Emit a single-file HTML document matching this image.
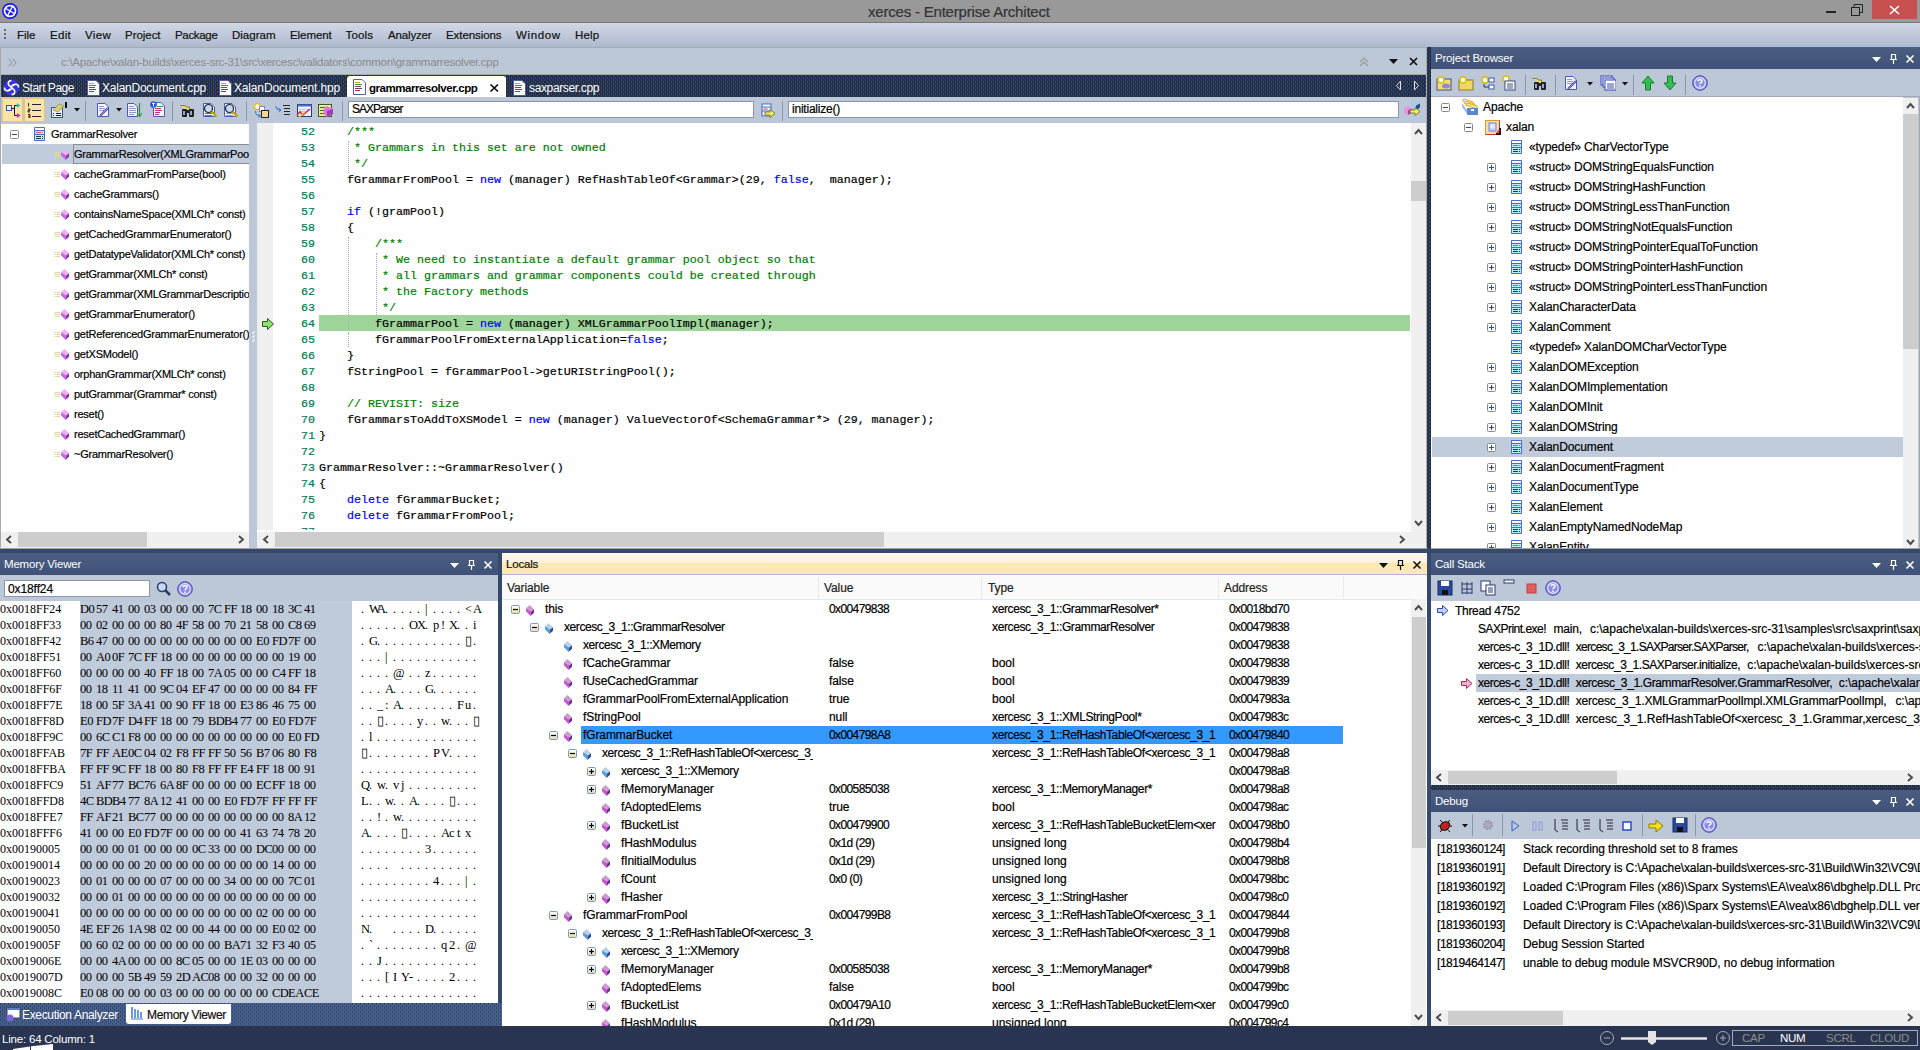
<!DOCTYPE html><html><head><meta charset="utf-8"><style>
*{margin:0;padding:0;box-sizing:border-box}
html,body{width:1920px;height:1050px;overflow:hidden;background:#bcc7d8;font-family:"Liberation Sans", sans-serif;}
.t{position:absolute;white-space:pre;font-family:"Liberation Sans", sans-serif;font-size:11px;letter-spacing:-0.25px;line-height:14px;color:#000;-webkit-text-stroke:0.2px currentColor}
.m{position:absolute;white-space:pre;font-family:"Liberation Mono", monospace;font-size:11.67px;line-height:16px;color:#000;-webkit-text-stroke:0.2px currentColor}
.s{position:absolute;white-space:pre;font-family:"Liberation Serif", serif;font-size:12px;line-height:16px;color:#000}
.hdr{position:absolute;background:linear-gradient(#4b5e80,#3f5179);}
.tb{position:absolute;background:#bcc7d8}
</style></head><body>
<svg width="0" height="0" style="position:absolute"><defs>
<pattern id="dp" width="4" height="4" patternUnits="userSpaceOnUse"><rect width="4" height="4" fill="#222e46"/><rect x="0" y="0" width="1" height="2" fill="#3b4e70"/><rect x="2" y="2" width="1" height="2" fill="#3b4e70"/></pattern>
<pattern id="dp2" width="4" height="4" patternUnits="userSpaceOnUse"><rect width="4" height="4" fill="#48608c"/><rect x="0" y="0" width="1" height="2" fill="#2e4068"/><rect x="2" y="2" width="1" height="2" fill="#2e4068"/></pattern>
</defs></svg>
<div style="position:absolute;left:0px;top:0px;width:1920px;height:22px;background:#999999"></div>
<div style="position:absolute;left:0px;top:22px;width:1920px;height:1px;background:#787878"></div>
<svg style="position:absolute;left:0px;top:0px" width="22" height="22" viewBox="0 0 22 22">
<circle cx="10" cy="11" r="8" fill="#1a1af8"/><circle cx="10" cy="11" r="6.3" fill="#fff"/><circle cx="10" cy="11" r="4.6" fill="#1a1af8"/>
<path d="M5 8 L15 14 M13 5.5 L7 16.5" stroke="#fff" stroke-width="1.4"/></svg>
<div class="t" style="left:868px;top:3px;font-size:15px;letter-spacing:-0.2px;color:#333;line-height:18px">xerces - Enterprise Architect</div>
<div style="position:absolute;left:1826px;top:11px;width:10px;height:2px;background:#222"></div>
<svg style="position:absolute;left:1851px;top:4px" width="12" height="12"><rect x="0.5" y="3.5" width="8" height="8" fill="none" stroke="#222"/><path d="M3 3.5 V0.5 H11.5 V8.5 H8.5" fill="none" stroke="#222"/></svg>
<div style="position:absolute;left:1872px;top:0px;width:45px;height:19px;background:#c75050"></div>
<svg style="position:absolute;left:1889px;top:5px" width="11" height="10"><path d="M1 1 L10 9 M10 1 L1 9" stroke="#fff" stroke-width="1.6"/></svg>
<div style="position:absolute;left:0px;top:23px;width:1920px;height:24px;background:linear-gradient(#d0d8e6,#c0c9da 50%,#adb9ce)"></div>
<div style="position:absolute;left:4px;top:29px;width:2px;height:2px;background:#5a6a80"></div>
<div style="position:absolute;left:4px;top:33px;width:2px;height:2px;background:#5a6a80"></div>
<div style="position:absolute;left:4px;top:37px;width:2px;height:2px;background:#5a6a80"></div>
<div class="t" style="left:17px;top:28px;font-size:11.5px;letter-spacing:-0.008px;color:#111">File</div>
<div class="t" style="left:50px;top:28px;font-size:11.5px;letter-spacing:0.296px;color:#111">Edit</div>
<div class="t" style="left:85px;top:28px;font-size:11.5px;letter-spacing:0.321px;color:#111">View</div>
<div class="t" style="left:125px;top:28px;font-size:11.5px;letter-spacing:-0.042px;color:#111">Project</div>
<div class="t" style="left:175px;top:28px;font-size:11.5px;letter-spacing:-0.322px;color:#111">Package</div>
<div class="t" style="left:232px;top:28px;font-size:11.5px;letter-spacing:0.006px;color:#111">Diagram</div>
<div class="t" style="left:290px;top:28px;font-size:11.5px;letter-spacing:-0.063px;color:#111">Element</div>
<div class="t" style="left:345.5px;top:28px;font-size:11.5px;letter-spacing:0.181px;color:#111">Tools</div>
<div class="t" style="left:388px;top:28px;font-size:11.5px;letter-spacing:-0.155px;color:#111">Analyzer</div>
<div class="t" style="left:446px;top:28px;font-size:11.5px;letter-spacing:-0.075px;color:#111">Extensions</div>
<div class="t" style="left:516px;top:28px;font-size:11.5px;letter-spacing:0.641px;color:#111">Window</div>
<div class="t" style="left:575px;top:28px;font-size:11.5px;letter-spacing:0.150px;color:#111">Help</div>
<div style="position:absolute;left:0px;top:47px;width:1427px;height:501px;background:#bcc7d8"></div>
<div style="position:absolute;left:0px;top:47px;width:1427px;height:1px;background:#a9a9a9"></div>
<div style="position:absolute;left:0px;top:47px;width:1px;height:500px;background:#a9a9a9"></div>
<div style="position:absolute;left:1426px;top:47px;width:1px;height:500px;background:#a9a9a9"></div>
<svg style="position:absolute;left:8px;top:58px" width="10" height="9"><path d="M0.5 0.5 L4 4.5 L0.5 8.5 M4.5 0.5 L8 4.5 L4.5 8.5" stroke="#9a9a9a" fill="none" stroke-width="1.1"/></svg>
<div class="t" style="left:61px;top:55px;font-size:11.5px;letter-spacing:-0.27px;color:#8a8a8a;-webkit-text-stroke:0">c:\Apache\xalan-builds\xerces-src-31\src\xercesc\validators\common\grammarresolver.cpp</div>
<svg style="position:absolute;left:1358px;top:56px" width="12" height="12"><path d="M2 6 L6 2 L10 6 M2 10 L6 6 L10 10" fill="none" stroke="#999" stroke-width="1.2"/></svg>
<svg style="position:absolute;left:1389px;top:59px" width="10" height="6"><path d="M0 0 H9 L4.5 5 Z" fill="#111"/></svg>
<svg style="position:absolute;left:1409px;top:57px" width="10" height="10"><path d="M1 1 L8 8 M8 1 L1 8" stroke="#111" stroke-width="1.7"/></svg>
<div style="position:absolute;left:1px;top:74px;width:1425px;height:1px;background:#a8a8a8"></div>
<svg style="position:absolute;left:1px;top:75px" width="1425" height="22"><rect width="1425" height="22" fill="url(#dp)"/></svg>
<svg style="position:absolute;left:3px;top:79px" width="17" height="17" viewBox="0 0 18 18">
<circle cx="9" cy="9" r="8.5" fill="#3a30e0"/>
<path d="M9 1.5 C5 1.5 4.5 6 7.5 7.5 C10.5 9 8 13 5 12 M9 16.5 C13 16.5 13.5 12 10.5 10.5 C7.5 9 10 5 13 6" fill="none" stroke="#fff" stroke-width="1.6"/>
<path d="M1.5 9 C1.5 13 6 13.5 7.5 10.5 M16.5 9 C16.5 5 12 4.5 10.5 7.5" fill="none" stroke="#fff" stroke-width="1.6"/></svg>
<div class="t" style="left:22px;top:81px;font-size:12px;letter-spacing:-0.470px;color:#fff;-webkit-text-stroke:0">Start Page</div>
<svg style="position:absolute;left:87px;top:80px" width="13" height="16" viewBox="0 0 13 16"><path d="M0.5 0.5 H9 L12.5 4 V15.5 H0.5 Z" fill="#fff" stroke="#5a5aa0"/><rect x="2" y="3" width="5" height="1" fill="#c8b400"/><rect x="2" y="5" width="7" height="1" fill="#2aa02a"/><rect x="2" y="7" width="6" height="1" fill="#b0286a"/><rect x="2" y="9" width="7" height="1" fill="#555"/><rect x="2" y="11" width="5" height="1" fill="#b0286a"/></svg>
<div class="t" style="left:102px;top:81px;font-size:12px;letter-spacing:-0.239px;color:#fff;-webkit-text-stroke:0">XalanDocument.cpp</div>
<svg style="position:absolute;left:219px;top:80px" width="13" height="16" viewBox="0 0 13 16"><path d="M0.5 0.5 H9 L12.5 4 V15.5 H0.5 Z" fill="#fff" stroke="#5a5aa0"/><rect x="2" y="3" width="5" height="1" fill="#c8b400"/><rect x="2" y="5" width="7" height="1" fill="#2aa02a"/><rect x="2" y="7" width="6" height="1" fill="#b0286a"/><rect x="2" y="9" width="7" height="1" fill="#555"/><rect x="2" y="11" width="5" height="1" fill="#b0286a"/></svg>
<div class="t" style="left:234px;top:81px;font-size:12px;letter-spacing:-0.161px;color:#fff;-webkit-text-stroke:0">XalanDocument.hpp</div>
<div style="position:absolute;left:347px;top:76px;width:159px;height:21px;background:#fff;border-radius:3px 3px 0 0"></div>
<svg style="position:absolute;left:353px;top:79px" width="13" height="16" viewBox="0 0 13 16"><path d="M0.5 0.5 H9 L12.5 4 V15.5 H0.5 Z" fill="#fff" stroke="#5a5aa0"/><rect x="2" y="3" width="5" height="1" fill="#c8b400"/><rect x="2" y="5" width="7" height="1" fill="#2aa02a"/><rect x="2" y="7" width="6" height="1" fill="#b0286a"/><rect x="2" y="9" width="7" height="1" fill="#555"/><rect x="2" y="11" width="5" height="1" fill="#b0286a"/></svg>
<div class="t" style="left:369px;top:81px;font-weight:bold;font-size:11.5px;letter-spacing:-0.45px;color:#000;-webkit-text-stroke:0">grammarresolver.cpp</div>
<svg style="position:absolute;left:490px;top:84px" width="9" height="8"><path d="M0.5 0.5 L8 7.5 M8 0.5 L0.5 7.5" stroke="#000" stroke-width="1.5"/></svg>
<svg style="position:absolute;left:513px;top:80px" width="13" height="16" viewBox="0 0 13 16"><path d="M0.5 0.5 H9 L12.5 4 V15.5 H0.5 Z" fill="#fff" stroke="#5a5aa0"/><rect x="2" y="3" width="5" height="1" fill="#c8b400"/><rect x="2" y="5" width="7" height="1" fill="#2aa02a"/><rect x="2" y="7" width="6" height="1" fill="#b0286a"/><rect x="2" y="9" width="7" height="1" fill="#555"/><rect x="2" y="11" width="5" height="1" fill="#b0286a"/></svg>
<div class="t" style="left:529px;top:81px;font-size:12px;letter-spacing:-0.362px;color:#fff;-webkit-text-stroke:0">saxparser.cpp</div>
<svg style="position:absolute;left:1395px;top:80px" width="30" height="12"><path d="M5.5 1 L1.5 5.5 L5.5 10 Z" fill="none" stroke="#dde"/><path d="M19.5 1 L23.5 5.5 L19.5 10 Z" fill="none" stroke="#dde"/></svg>
<div style="position:absolute;left:1px;top:97px;width:1425px;height:26px;background:#bcc7d8"></div>
<div style="position:absolute;left:2px;top:98px;width:21px;height:24px;background:#fce4a8;border:1px solid #e8c478"></div>
<div style="position:absolute;left:24px;top:98px;width:21px;height:24px;background:#fce4a8;border:1px solid #e8c478"></div>
<svg style="position:absolute;left:6px;top:102px" width="16" height="16" viewBox="0 0 16 16"><rect x="0.5" y="3.5" width="5" height="5" fill="#e8f0ff" stroke="#3050b0"/><path d="M5.5 6.5 H8.5 M8.5 3.5 V13.5 M8.5 3.5 H11 M8.5 13.5 H11" stroke="#111" fill="none"/><path d="M11 1 L14.5 3.5 L11 6Z" fill="#20c8c8"/><path d="M11 11 L14.5 13.5 L11 16Z" fill="#e020b0"/></svg>
<svg style="position:absolute;left:27px;top:102px" width="16" height="16" viewBox="0 0 16 16"><path d="M1.5 1 V4.5 M1 7 H3 V8.5 H1 V10 H3 M1 12.5 H3 V16 H1 M1 14.2 H3" stroke="#111" fill="none" stroke-width="0.9"/><path d="M5 2.5 H14 M5 8.5 H14 M5 14.5 H14" stroke="#223" stroke-width="1.2"/></svg>
<svg style="position:absolute;left:51px;top:102px" width="16" height="16" viewBox="0 0 16 16"><rect x="0.5" y="5.5" width="11" height="10" fill="#e8f0ff" stroke="#3050b0"/><path d="M2 11.5 H3 M5 11.5 H10 M2 13.5 H3 M5 13.5 H10" stroke="#223"/><path d="M2 8 L8 2 L13 4 L7 10Z" fill="#d8d070" stroke="#8a8030" stroke-width="0.6"/><rect x="14" y="0" width="2" height="6" fill="#111"/></svg>
<svg style="position:absolute;left:74px;top:108px" width="6" height="4"><path d="M0 0 H6 L3 3.5Z" fill="#111"/></svg>
<div style="position:absolute;left:85px;top:101px;width:1px;height:20px;background:#8996ab"></div>
<svg style="position:absolute;left:95px;top:102px" width="16" height="16" viewBox="0 0 16 16"><path d="M2.5 1.5 H10 L13.5 5 V14.5 H2.5 Z" fill="#f4f6ff" stroke="#4a5ab0"/><path d="M4 4.5 H9 M4 6.5 H10 M4 8.5 H9" stroke="#9098c8"/><path d="M5 14 L13 6" stroke="#3a3ab0" stroke-width="2"/><path d="M5 14 L13 6" stroke="#c8c8f0" stroke-width="0.6"/></svg>
<svg style="position:absolute;left:116px;top:108px" width="6" height="4"><path d="M0 0 H6 L3 3.5Z" fill="#111"/></svg>
<svg style="position:absolute;left:126px;top:102px" width="16" height="16" viewBox="0 0 16 16"><path d="M1.5 1.5 H8 L11.5 5 V14.5 H1.5 Z" fill="#f4f6ff" stroke="#4a5ab0"/><path d="M3 4.5 H8 M3 6.5 H10 M3 8.5 H10 M3 10.5 H10 M3 12.5 H8" stroke="#9098c8"/><path d="M13.5 1 V14 M11 11 L13.5 14.5 L16 11" stroke="#2a9a3a" fill="none" stroke-width="1.2"/></svg>
<svg style="position:absolute;left:150px;top:101px" width="16" height="16" viewBox="0 0 16 16"><path d="M3.5 1.5 H11 L14.5 5 V15.5 H3.5 Z" fill="#f4f6ff" stroke="#4a5ab0"/><path d="M7 5.5 H13 M5 7.5 H11 M5 9.5 H12 M5 11.5 H10 M5 13.5 H9" stroke="#c03070"/><path d="M7 5.5 H13" stroke="#30a030"/><circle cx="3.5" cy="3.5" r="3.3" fill="#2a50d0"/><path d="M2 2.3 H5 M3.5 2.3 V5.5" stroke="#fff"/></svg>
<div style="position:absolute;left:172px;top:101px;width:1px;height:20px;background:#8996ab"></div>
<svg style="position:absolute;left:180px;top:102px" width="16" height="16" viewBox="0 0 16 16"><path d="M0.5 3.5 H5 L6 5 H9.5 V9" fill="#f0e070" stroke="#8a7a20"/><rect x="2" y="7" width="5" height="8" rx="1" fill="#222"/><rect x="9" y="7" width="5" height="8" rx="1" fill="#222"/><rect x="6" y="8" width="4" height="3" fill="#222"/><rect x="3" y="9" width="2" height="4" fill="#8aa8e8"/><rect x="10" y="9" width="2" height="4" fill="#8aa8e8"/></svg>
<svg style="position:absolute;left:202px;top:102px" width="16" height="16" viewBox="0 0 16 16"><path d="M1.5 1.5 H9 L12.5 5 V14.5 H1.5 Z" fill="#f4f6ff" stroke="#4a5ab0"/><path d="M3 11.5 H10 M3 13.5 H10" stroke="#e04040"/><circle cx="6.5" cy="6.5" r="4" fill="#c8d8f8" stroke="#222" stroke-width="1.2"/><path d="M9.5 9.5 L14.5 14.5" stroke="#c8a000" stroke-width="2.4"/></svg>
<svg style="position:absolute;left:223px;top:102px" width="16" height="16" viewBox="0 0 16 16"><path d="M1.5 1.5 H9 L12.5 5 V14.5 H1.5 Z" fill="#f4f6ff" stroke="#4a5ab0"/><path d="M3 11.5 H10 M3 13.5 H10" stroke="#9098c8"/><circle cx="6.5" cy="6.5" r="4" fill="#c8d8f8" stroke="#222" stroke-width="1.2"/><path d="M9.5 9.5 L14.5 14.5" stroke="#c8a000" stroke-width="2.4"/></svg>
<div style="position:absolute;left:246px;top:101px;width:1px;height:20px;background:#8996ab"></div>
<svg style="position:absolute;left:253px;top:102px" width="16" height="16" viewBox="0 0 16 16"><circle cx="4.5" cy="4.5" r="3" fill="#fff" stroke="#e0c800" stroke-width="1.5"/><rect x="6.5" y="4.5" width="5" height="5" fill="#fff" stroke="#8a8ab0"/><rect x="8.5" y="8.5" width="7" height="7" fill="#f4d890" stroke="#222"/><path d="M2.5 9 Q2.5 14 7 14" stroke="#3070d0" fill="none"/><path d="M5.5 12.5 L7.5 14 L5.5 15.5" stroke="#3070d0" fill="none"/></svg>
<svg style="position:absolute;left:275px;top:102px" width="16" height="16" viewBox="0 0 16 16"><path d="M0.5 4 Q1 8 5 8 M3.5 6 L6 8 L3.5 10" stroke="#3070d0" fill="none"/><path d="M8 3.5 H15 M9 6.5 H15 M9 9.5 H15 M9 12.5 H15" stroke="#223"/></svg>
<svg style="position:absolute;left:296px;top:102px" width="16" height="16" viewBox="0 0 16 16"><rect x="1.5" y="2.5" width="14" height="12" fill="#eef2ff" stroke="#2a3a70"/><rect x="1.5" y="2.5" width="14" height="2" fill="#4a6ad0"/><path d="M3.5 7.5 H13 M3.5 9.5 H10" stroke="#8a9ac8" stroke-dasharray="1 1"/><path d="M1 13 L4 10 L7 13 L14 7" stroke="#c03060" stroke-width="1.6" fill="none"/><path d="M3 15 L9 10" stroke="#e8c020" stroke-width="1.6"/></svg>
<svg style="position:absolute;left:318px;top:102px" width="16" height="16" viewBox="0 0 16 16"><rect x="0.5" y="2.5" width="13" height="12" fill="#f0e890" stroke="#3a5a30"/><path d="M2 5.5 H7 M2 8.5 H7 M2 11.5 H7" stroke="#3a6a30"/><path d="M9 4 L15 7 V12 L9 15 L6 12 V7Z" fill="#e070e8"/><path d="M9 9 L15 7 V12 L9 15Z" fill="#9a40b0"/></svg>
<div style="position:absolute;left:342px;top:101px;width:1px;height:20px;background:#8996ab"></div>
<div style="position:absolute;left:348px;top:101px;width:406px;height:17px;background:#fff;border:1px solid #8a96aa"></div>
<div class="t" style="left:352px;top:102px;font-size:12px;letter-spacing:-0.984px;">SAXParser</div>
<svg style="position:absolute;left:761px;top:103px" width="15" height="16" viewBox="0 0 15 16"><rect x="0.5" y="0.5" width="10" height="13" fill="#4a6ac8"/><rect x="1.5" y="1.5" width="8" height="2" fill="#fff"/><rect x="1.5" y="4.5" width="8" height="3" fill="#e8f0ff"/><rect x="2.5" y="5.5" width="4" height="1" fill="#f04040"/><rect x="1.5" y="8.5" width="8" height="4" fill="#e8f0ff"/><path d="M4 9 H9 V6.5 L14 10.5 L9 14.5 V12 H4Z" fill="#f4f060" stroke="#6a6a10" stroke-width="0.8"/></svg>
<div style="position:absolute;left:782px;top:101px;width:1px;height:20px;background:#8996ab"></div>
<div style="position:absolute;left:788px;top:101px;width:611px;height:17px;background:#fff;border:1px solid #8a96aa"></div>
<div class="t" style="left:792px;top:102px;font-size:12px;letter-spacing:-0.223px;">initialize()</div>
<svg style="position:absolute;left:1404px;top:101px" width="17" height="17" viewBox="0 0 17 17"><path d="M12 0 L16 2.5 V6.5 L12 9 L8 6.5 V2.5Z" fill="#a8c8f0"/><path d="M12 4.5 L16 2.5 V6.5 L12 9Z" fill="#2a4a90"/><path d="M4 5 L8 7.5 V11.5 L4 14 L0 11.5 V7.5Z" fill="#e890e0"/><path d="M4 9.5 L8 7.5 V11.5 L4 14Z" fill="#a040a8"/><path d="M6 9 H11 V6.5 L16 10.5 L11 14.5 V12 H6Z" fill="#f4f060" stroke="#6a6a10" stroke-width="0.8"/></svg>
<div style="position:absolute;left:1px;top:124px;width:248px;height:423px;background:#fff"></div>
<svg style="position:absolute;left:10px;top:130px" width="9" height="9"><rect x="0.5" y="0.5" width="8" height="8" rx="1" fill="#fff" stroke="#8a8a8a"/><path d="M2 4.5 H7" stroke="#2a4a90"/></svg>
<svg style="position:absolute;left:34px;top:127px" width="11" height="14" viewBox="0 0 11 14"><rect x="0" y="0" width="11" height="14" rx="1" fill="#4a6ac8"/><rect x="1" y="1" width="9" height="2" fill="#fff"/><rect x="1" y="4" width="9" height="3" fill="#b8eef8"/><rect x="2" y="5" width="5" height="1" fill="#f05050"/><rect x="8" y="5" width="1" height="1" fill="#f05050"/><rect x="1" y="8" width="9" height="5" fill="#b8eef8"/><rect x="2" y="9" width="5" height="1" fill="#333"/><rect x="8" y="9" width="1" height="1" fill="#333"/><rect x="2" y="11" width="5" height="1" fill="#333"/><rect x="8" y="11" width="1" height="1" fill="#333"/></svg>
<div class="t" style="left:51px;top:127px;">GrammarResolver</div>
<div style="position:absolute;left:2px;top:144px;width:247px;height:20px;background:#c0cbdc"></div>
<div style="position:absolute;left:73px;top:144px;width:176px;height:20px;border:1px solid #8e8e8e;border-right:none"></div>
<div style="position:absolute;left:0;top:0;width:249px;height:547px;overflow:hidden">
<svg style="position:absolute;left:54px;top:149px" width="16" height="12" viewBox="0 0 16 12"><path d="M0.5 3.5 H6 M0 5.5 H6 M0.5 7.5 H6" stroke="#e0d8a8"/><path d="M10.5 0 L7 3.2 L12.2 6.6 L15 4.2Z" fill="#f0b0f0"/><path d="M7 3.2 V6.3 L11.5 11 L12.2 6.6Z" fill="#c868d8"/><path d="M12.2 6.6 L11.5 11 L15 7.7 V4.2Z" fill="#7a3aa8"/></svg>
<div class="t" style="left:74px;top:147px;">GrammarResolver(XMLGrammarPool*</div>
<svg style="position:absolute;left:54px;top:169px" width="16" height="12" viewBox="0 0 16 12"><path d="M0.5 3.5 H6 M0 5.5 H6 M0.5 7.5 H6" stroke="#e0d8a8"/><path d="M10.5 0 L7 3.2 L12.2 6.6 L15 4.2Z" fill="#f0b0f0"/><path d="M7 3.2 V6.3 L11.5 11 L12.2 6.6Z" fill="#c868d8"/><path d="M12.2 6.6 L11.5 11 L15 7.7 V4.2Z" fill="#7a3aa8"/></svg>
<div class="t" style="left:74px;top:167px;">cacheGrammarFromParse(bool)</div>
<svg style="position:absolute;left:54px;top:189px" width="16" height="12" viewBox="0 0 16 12"><path d="M0.5 3.5 H6 M0 5.5 H6 M0.5 7.5 H6" stroke="#e0d8a8"/><path d="M10.5 0 L7 3.2 L12.2 6.6 L15 4.2Z" fill="#f0b0f0"/><path d="M7 3.2 V6.3 L11.5 11 L12.2 6.6Z" fill="#c868d8"/><path d="M12.2 6.6 L11.5 11 L15 7.7 V4.2Z" fill="#7a3aa8"/></svg>
<div class="t" style="left:74px;top:187px;">cacheGrammars()</div>
<svg style="position:absolute;left:54px;top:209px" width="16" height="12" viewBox="0 0 16 12"><path d="M0.5 3.5 H6 M0 5.5 H6 M0.5 7.5 H6" stroke="#e0d8a8"/><path d="M10.5 0 L7 3.2 L12.2 6.6 L15 4.2Z" fill="#f0b0f0"/><path d="M7 3.2 V6.3 L11.5 11 L12.2 6.6Z" fill="#c868d8"/><path d="M12.2 6.6 L11.5 11 L15 7.7 V4.2Z" fill="#7a3aa8"/></svg>
<div class="t" style="left:74px;top:207px;">containsNameSpace(XMLCh* const)</div>
<svg style="position:absolute;left:54px;top:229px" width="16" height="12" viewBox="0 0 16 12"><path d="M0.5 3.5 H6 M0 5.5 H6 M0.5 7.5 H6" stroke="#e0d8a8"/><path d="M10.5 0 L7 3.2 L12.2 6.6 L15 4.2Z" fill="#f0b0f0"/><path d="M7 3.2 V6.3 L11.5 11 L12.2 6.6Z" fill="#c868d8"/><path d="M12.2 6.6 L11.5 11 L15 7.7 V4.2Z" fill="#7a3aa8"/></svg>
<div class="t" style="left:74px;top:227px;">getCachedGrammarEnumerator()</div>
<svg style="position:absolute;left:54px;top:249px" width="16" height="12" viewBox="0 0 16 12"><path d="M0.5 3.5 H6 M0 5.5 H6 M0.5 7.5 H6" stroke="#e0d8a8"/><path d="M10.5 0 L7 3.2 L12.2 6.6 L15 4.2Z" fill="#f0b0f0"/><path d="M7 3.2 V6.3 L11.5 11 L12.2 6.6Z" fill="#c868d8"/><path d="M12.2 6.6 L11.5 11 L15 7.7 V4.2Z" fill="#7a3aa8"/></svg>
<div class="t" style="left:74px;top:247px;">getDatatypeValidator(XMLCh* const)</div>
<svg style="position:absolute;left:54px;top:269px" width="16" height="12" viewBox="0 0 16 12"><path d="M0.5 3.5 H6 M0 5.5 H6 M0.5 7.5 H6" stroke="#e0d8a8"/><path d="M10.5 0 L7 3.2 L12.2 6.6 L15 4.2Z" fill="#f0b0f0"/><path d="M7 3.2 V6.3 L11.5 11 L12.2 6.6Z" fill="#c868d8"/><path d="M12.2 6.6 L11.5 11 L15 7.7 V4.2Z" fill="#7a3aa8"/></svg>
<div class="t" style="left:74px;top:267px;">getGrammar(XMLCh* const)</div>
<svg style="position:absolute;left:54px;top:289px" width="16" height="12" viewBox="0 0 16 12"><path d="M0.5 3.5 H6 M0 5.5 H6 M0.5 7.5 H6" stroke="#e0d8a8"/><path d="M10.5 0 L7 3.2 L12.2 6.6 L15 4.2Z" fill="#f0b0f0"/><path d="M7 3.2 V6.3 L11.5 11 L12.2 6.6Z" fill="#c868d8"/><path d="M12.2 6.6 L11.5 11 L15 7.7 V4.2Z" fill="#7a3aa8"/></svg>
<div class="t" style="left:74px;top:287px;">getGrammar(XMLGrammarDescription</div>
<svg style="position:absolute;left:54px;top:309px" width="16" height="12" viewBox="0 0 16 12"><path d="M0.5 3.5 H6 M0 5.5 H6 M0.5 7.5 H6" stroke="#e0d8a8"/><path d="M10.5 0 L7 3.2 L12.2 6.6 L15 4.2Z" fill="#f0b0f0"/><path d="M7 3.2 V6.3 L11.5 11 L12.2 6.6Z" fill="#c868d8"/><path d="M12.2 6.6 L11.5 11 L15 7.7 V4.2Z" fill="#7a3aa8"/></svg>
<div class="t" style="left:74px;top:307px;">getGrammarEnumerator()</div>
<svg style="position:absolute;left:54px;top:329px" width="16" height="12" viewBox="0 0 16 12"><path d="M0.5 3.5 H6 M0 5.5 H6 M0.5 7.5 H6" stroke="#e0d8a8"/><path d="M10.5 0 L7 3.2 L12.2 6.6 L15 4.2Z" fill="#f0b0f0"/><path d="M7 3.2 V6.3 L11.5 11 L12.2 6.6Z" fill="#c868d8"/><path d="M12.2 6.6 L11.5 11 L15 7.7 V4.2Z" fill="#7a3aa8"/></svg>
<div class="t" style="left:74px;top:327px;">getReferencedGrammarEnumerator()</div>
<svg style="position:absolute;left:54px;top:349px" width="16" height="12" viewBox="0 0 16 12"><path d="M0.5 3.5 H6 M0 5.5 H6 M0.5 7.5 H6" stroke="#e0d8a8"/><path d="M10.5 0 L7 3.2 L12.2 6.6 L15 4.2Z" fill="#f0b0f0"/><path d="M7 3.2 V6.3 L11.5 11 L12.2 6.6Z" fill="#c868d8"/><path d="M12.2 6.6 L11.5 11 L15 7.7 V4.2Z" fill="#7a3aa8"/></svg>
<div class="t" style="left:74px;top:347px;">getXSModel()</div>
<svg style="position:absolute;left:54px;top:369px" width="16" height="12" viewBox="0 0 16 12"><path d="M0.5 3.5 H6 M0 5.5 H6 M0.5 7.5 H6" stroke="#e0d8a8"/><path d="M10.5 0 L7 3.2 L12.2 6.6 L15 4.2Z" fill="#f0b0f0"/><path d="M7 3.2 V6.3 L11.5 11 L12.2 6.6Z" fill="#c868d8"/><path d="M12.2 6.6 L11.5 11 L15 7.7 V4.2Z" fill="#7a3aa8"/></svg>
<div class="t" style="left:74px;top:367px;">orphanGrammar(XMLCh* const)</div>
<svg style="position:absolute;left:54px;top:389px" width="16" height="12" viewBox="0 0 16 12"><path d="M0.5 3.5 H6 M0 5.5 H6 M0.5 7.5 H6" stroke="#e0d8a8"/><path d="M10.5 0 L7 3.2 L12.2 6.6 L15 4.2Z" fill="#f0b0f0"/><path d="M7 3.2 V6.3 L11.5 11 L12.2 6.6Z" fill="#c868d8"/><path d="M12.2 6.6 L11.5 11 L15 7.7 V4.2Z" fill="#7a3aa8"/></svg>
<div class="t" style="left:74px;top:387px;">putGrammar(Grammar* const)</div>
<svg style="position:absolute;left:54px;top:409px" width="16" height="12" viewBox="0 0 16 12"><path d="M0.5 3.5 H6 M0 5.5 H6 M0.5 7.5 H6" stroke="#e0d8a8"/><path d="M10.5 0 L7 3.2 L12.2 6.6 L15 4.2Z" fill="#f0b0f0"/><path d="M7 3.2 V6.3 L11.5 11 L12.2 6.6Z" fill="#c868d8"/><path d="M12.2 6.6 L11.5 11 L15 7.7 V4.2Z" fill="#7a3aa8"/></svg>
<div class="t" style="left:74px;top:407px;">reset()</div>
<svg style="position:absolute;left:54px;top:429px" width="16" height="12" viewBox="0 0 16 12"><path d="M0.5 3.5 H6 M0 5.5 H6 M0.5 7.5 H6" stroke="#e0d8a8"/><path d="M10.5 0 L7 3.2 L12.2 6.6 L15 4.2Z" fill="#f0b0f0"/><path d="M7 3.2 V6.3 L11.5 11 L12.2 6.6Z" fill="#c868d8"/><path d="M12.2 6.6 L11.5 11 L15 7.7 V4.2Z" fill="#7a3aa8"/></svg>
<div class="t" style="left:74px;top:427px;">resetCachedGrammar()</div>
<svg style="position:absolute;left:54px;top:449px" width="16" height="12" viewBox="0 0 16 12"><path d="M0.5 3.5 H6 M0 5.5 H6 M0.5 7.5 H6" stroke="#e0d8a8"/><path d="M10.5 0 L7 3.2 L12.2 6.6 L15 4.2Z" fill="#f0b0f0"/><path d="M7 3.2 V6.3 L11.5 11 L12.2 6.6Z" fill="#c868d8"/><path d="M12.2 6.6 L11.5 11 L15 7.7 V4.2Z" fill="#7a3aa8"/></svg>
<div class="t" style="left:74px;top:447px;">~GrammarResolver()</div>
</div>
<div style="position:absolute;left:1px;top:532px;width:248px;height:16px;background:#f0f0f0"></div>
<div style="position:absolute;left:18px;top:532px;width:129px;height:15px;background:#cdcdcd"></div>
<svg style="position:absolute;left:5px;top:535px" width="8" height="9"><path d="M6 1 L2 4.5 L6 8" stroke="#4a4a4a" stroke-width="1.9" fill="none"/></svg>
<svg style="position:absolute;left:237px;top:535px" width="8" height="9"><path d="M2 1 L6 4.5 L2 8" stroke="#4a4a4a" stroke-width="1.9" fill="none"/></svg>
<div style="position:absolute;left:249px;top:123px;width:8px;height:424px;background:#bcc7d8"></div>
<svg style="position:absolute;left:252px;top:331px" width="3" height="3"><path d="M0.5 2.5 L2.5 0.5" stroke="#fff" stroke-width="1.2"/></svg>
<svg style="position:absolute;left:252px;top:335px" width="3" height="3"><path d="M0.5 2.5 L2.5 0.5" stroke="#fff" stroke-width="1.2"/></svg>
<svg style="position:absolute;left:252px;top:339px" width="3" height="3"><path d="M0.5 2.5 L2.5 0.5" stroke="#fff" stroke-width="1.2"/></svg>
<div style="position:absolute;left:257px;top:123px;width:1154px;height:409px;background:#fefefe"></div>
<div style="position:absolute;left:257px;top:123px;width:16px;height:407px;background:#f0f0f0"></div>
<div style="position:absolute;left:319px;top:315px;width:1091px;height:16px;background:#9fd59a"></div>
<div style="position:absolute;left:348px;top:141px;width:1px;height:32px;border-left:1px dotted #b0b0b0"></div>
<div style="position:absolute;left:348px;top:237px;width:1px;height:96px;border-left:1px dotted #b0b0b0"></div>
<div style="position:absolute;left:348px;top:333px;width:1px;height:14px;border-left:1px dotted #b0b0b0"></div>
<div style="position:absolute;left:376px;top:253px;width:1px;height:64px;border-left:1px dotted #b0b0b0"></div>
<div style="position:absolute;left:257px;top:123px;width:1153px;height:407px;overflow:hidden">
<div class="m" style="left:44px;top:1px;color:#007a55">52</div>
<div class="m" style="left:62px;top:1px"><span style="color:#008000">    /***</span></div>
<div class="m" style="left:44px;top:17px;color:#007a55">53</div>
<div class="m" style="left:62px;top:17px"><span style="color:#008000">     * Grammars in this set are not owned</span></div>
<div class="m" style="left:44px;top:33px;color:#007a55">54</div>
<div class="m" style="left:62px;top:33px"><span style="color:#008000">     */</span></div>
<div class="m" style="left:44px;top:49px;color:#007a55">55</div>
<div class="m" style="left:62px;top:49px">    fGrammarFromPool = <span style="color:#0000ff">new</span> (manager) RefHashTableOf&lt;Grammar&gt;(29, <span style="color:#0000ff">false</span>,  manager);</div>
<div class="m" style="left:44px;top:65px;color:#007a55">56</div>
<div class="m" style="left:62px;top:65px"></div>
<div class="m" style="left:44px;top:81px;color:#007a55">57</div>
<div class="m" style="left:62px;top:81px">    <span style="color:#0000ff">if</span> (!gramPool)</div>
<div class="m" style="left:44px;top:97px;color:#007a55">58</div>
<div class="m" style="left:62px;top:97px">    {</div>
<div class="m" style="left:44px;top:113px;color:#007a55">59</div>
<div class="m" style="left:62px;top:113px"><span style="color:#008000">        /***</span></div>
<div class="m" style="left:44px;top:129px;color:#007a55">60</div>
<div class="m" style="left:62px;top:129px"><span style="color:#008000">         * We need to instantiate a default grammar pool object so that</span></div>
<div class="m" style="left:44px;top:145px;color:#007a55">61</div>
<div class="m" style="left:62px;top:145px"><span style="color:#008000">         * all grammars and grammar components could be created through</span></div>
<div class="m" style="left:44px;top:161px;color:#007a55">62</div>
<div class="m" style="left:62px;top:161px"><span style="color:#008000">         * the Factory methods</span></div>
<div class="m" style="left:44px;top:177px;color:#007a55">63</div>
<div class="m" style="left:62px;top:177px"><span style="color:#008000">         */</span></div>
<div class="m" style="left:44px;top:193px;color:#007a55">64</div>
<div class="m" style="left:62px;top:193px">        fGrammarPool = <span style="color:#0000ff">new</span> (manager) XMLGrammarPoolImpl(manager);</div>
<div class="m" style="left:44px;top:209px;color:#007a55">65</div>
<div class="m" style="left:62px;top:209px">        fGrammarPoolFromExternalApplication=<span style="color:#0000ff">false</span>;</div>
<div class="m" style="left:44px;top:225px;color:#007a55">66</div>
<div class="m" style="left:62px;top:225px">    }</div>
<div class="m" style="left:44px;top:241px;color:#007a55">67</div>
<div class="m" style="left:62px;top:241px">    fStringPool = fGrammarPool-&gt;getURIStringPool();</div>
<div class="m" style="left:44px;top:257px;color:#007a55">68</div>
<div class="m" style="left:62px;top:257px"></div>
<div class="m" style="left:44px;top:273px;color:#007a55">69</div>
<div class="m" style="left:62px;top:273px"><span style="color:#008000">    // REVISIT: size</span></div>
<div class="m" style="left:44px;top:289px;color:#007a55">70</div>
<div class="m" style="left:62px;top:289px">    fGrammarsToAddToXSModel = <span style="color:#0000ff">new</span> (manager) ValueVectorOf&lt;SchemaGrammar*&gt; (29, manager);</div>
<div class="m" style="left:44px;top:305px;color:#007a55">71</div>
<div class="m" style="left:62px;top:305px">}</div>
<div class="m" style="left:44px;top:321px;color:#007a55">72</div>
<div class="m" style="left:62px;top:321px"></div>
<div class="m" style="left:44px;top:337px;color:#007a55">73</div>
<div class="m" style="left:62px;top:337px">GrammarResolver::~GrammarResolver()</div>
<div class="m" style="left:44px;top:353px;color:#007a55">74</div>
<div class="m" style="left:62px;top:353px">{</div>
<div class="m" style="left:44px;top:369px;color:#007a55">75</div>
<div class="m" style="left:62px;top:369px">    <span style="color:#0000ff">delete</span> fGrammarBucket;</div>
<div class="m" style="left:44px;top:385px;color:#007a55">76</div>
<div class="m" style="left:62px;top:385px">    <span style="color:#0000ff">delete</span> fGrammarFromPool;</div>
<div class="m" style="left:44px;top:401px;color:#007a55">77</div>
<div class="m" style="left:62px;top:401px"></div>
</div>
<svg style="position:absolute;left:262px;top:318px" width="12" height="12" viewBox="0 0 12 12"><path d="M0.5 3.5 H5.5 V0.5 L11.5 6 L5.5 11.5 V8.5 H0.5 Z" fill="#8ee070" stroke="#2a5a20"/></svg>
<div style="position:absolute;left:1411px;top:123px;width:15px;height:409px;background:#f0f0f0"></div>
<div style="position:absolute;left:1411px;top:181px;width:15px;height:20px;background:#cdcdcd"></div>
<svg style="position:absolute;left:1414px;top:128px" width="9" height="8"><path d="M1 6 L4.5 2 L8 6" stroke="#4a4a4a" stroke-width="1.9" fill="none"/></svg>
<svg style="position:absolute;left:1414px;top:519px" width="9" height="8"><path d="M1 2 L4.5 6 L8 2" stroke="#4a4a4a" stroke-width="1.9" fill="none"/></svg>
<div style="position:absolute;left:257px;top:532px;width:1169px;height:16px;background:#f0f0f0"></div>
<div style="position:absolute;left:275px;top:532px;width:609px;height:15px;background:#cdcdcd"></div>
<svg style="position:absolute;left:262px;top:535px" width="8" height="9"><path d="M6 1 L2 4.5 L6 8" stroke="#4a4a4a" stroke-width="1.9" fill="none"/></svg>
<svg style="position:absolute;left:1398px;top:535px" width="8" height="9"><path d="M2 1 L6 4.5 L2 8" stroke="#4a4a4a" stroke-width="1.9" fill="none"/></svg>
<svg style="position:absolute;left:1427px;top:47px" width="4" height="501"><rect width="4" height="501" fill="url(#dp)"/></svg>
<div style="position:absolute;left:1427px;top:548px;width:4px;height:478px;background:#34496b"></div>
<div style="position:absolute;left:498px;top:553px;width:4px;height:450px;background:#34496b"></div>
<div style="position:absolute;left:0px;top:548px;width:1920px;height:5px;background:#34496b"></div>
<div style="position:absolute;left:0px;top:548px;width:1427px;height:1px;background:#a4a4a4"></div>
<div style="position:absolute;left:1431px;top:548px;width:489px;height:1px;background:#a4a4a4"></div>
<div style="position:absolute;left:1431px;top:47px;width:489px;height:22px;background:linear-gradient(#4b5e80,#3f5179)"></div>
<div class="t" style="left:1435px;top:51px;font-size:11.5px;letter-spacing:-0.2px;color:#fff;-webkit-text-stroke:0">Project Browser</div>
<svg style="position:absolute;left:1872px;top:53px" width="44" height="12"><path d="M0 4 H9 L4.5 9 Z" fill="#fff"/><path d="M19.5 1.5 H23.5 V6.5 H19.5 Z M18 6.5 H25 M21.5 7 V11" stroke="#fff" stroke-width="1.2" fill="none"/><path d="M34.5 2.5 L41.5 9.5 M41.5 2.5 L34.5 9.5" stroke="#fff" stroke-width="1.6"/></svg>
<div style="position:absolute;left:1431px;top:69px;width:489px;height:28px;background:#bcc7d8"></div>
<svg style="position:absolute;left:1436px;top:75px" width="16" height="16" viewBox="0 0 16 16"><rect x="1" y="4" width="14" height="11" fill="#f4e070" stroke="#4a4a90"/><circle cx="5" cy="5" r="3" fill="#fff" stroke="#d8c000" stroke-width="1.5"/><ellipse cx="10" cy="11" rx="4" ry="2.5" fill="#8a8ae0"/></svg>
<svg style="position:absolute;left:1458px;top:75px" width="16" height="16" viewBox="0 0 16 16"><rect x="1" y="5" width="14" height="10" fill="#f0d860" stroke="#8a7a30"/><circle cx="5" cy="5" r="3" fill="#fff" stroke="#d8c000" stroke-width="1.5"/></svg>
<svg style="position:absolute;left:1480px;top:75px" width="16" height="16" viewBox="0 0 16 16"><circle cx="5" cy="5" r="3" fill="#fff" stroke="#d8c000" stroke-width="1.5"/><rect x="9" y="3" width="5" height="4" fill="#fff" stroke="#3a5ab0"/><rect x="9" y="10" width="5" height="4" fill="#fff" stroke="#3a5ab0"/><path d="M4 9 V12 H9" stroke="#333" fill="none"/></svg>
<svg style="position:absolute;left:1501px;top:75px" width="16" height="16" viewBox="0 0 16 16"><circle cx="5" cy="4" r="3" fill="#fff" stroke="#d8c000" stroke-width="1.5"/><rect x="4" y="6" width="10" height="9" fill="#fff" stroke="#3a4a80"/><path d="M6 9 H12 M6 11 H12 M6 13 H12" stroke="#3a4a80"/></svg>
<div style="position:absolute;left:1525px;top:75px;width:1px;height:20px;background:#8996ab"></div>
<svg style="position:absolute;left:1532px;top:75px" width="16" height="16" viewBox="0 0 16 16"><path d="M0.5 3.5 H5 L6 5 H9.5 V9" fill="#f0e070" stroke="#8a7a20"/><rect x="2" y="7" width="5" height="8" rx="1" fill="#222"/><rect x="9" y="7" width="5" height="8" rx="1" fill="#222"/><rect x="6" y="8" width="4" height="3" fill="#222"/><rect x="3" y="9" width="2" height="4" fill="#8aa8e8"/><rect x="10" y="9" width="2" height="4" fill="#8aa8e8"/></svg>
<div style="position:absolute;left:1555px;top:75px;width:1px;height:20px;background:#8996ab"></div>
<svg style="position:absolute;left:1563px;top:75px" width="16" height="16" viewBox="0 0 16 16"><path d="M2.5 1.5 H10 L13.5 5 V14.5 H2.5 Z" fill="#f4f6ff" stroke="#4a5ab0"/><path d="M4 4.5 H9 M4 6.5 H10 M4 8.5 H9" stroke="#9098c8"/><path d="M5 14 L13 6" stroke="#3a3ab0" stroke-width="2"/><path d="M5 14 L13 6" stroke="#c8c8f0" stroke-width="0.6"/></svg>
<svg style="position:absolute;left:1587px;top:82px" width="6" height="4"><path d="M0 0 H6 L3 3.5Z" fill="#111"/></svg>
<svg style="position:absolute;left:1600px;top:75px" width="16" height="16" viewBox="0 0 16 16"><rect x="1" y="1" width="11" height="9" fill="#e8eeff" stroke="#3a4ab0"/><rect x="3" y="3" width="11" height="9" fill="#e8eeff" stroke="#3a4ab0"/><rect x="5" y="5" width="11" height="10" fill="#fff" stroke="#3a4ab0"/><path d="M7 9 H14 M7 11 H14 M7 13 H14" stroke="#3a4ab0"/></svg>
<svg style="position:absolute;left:1622px;top:82px" width="6" height="4"><path d="M0 0 H6 L3 3.5Z" fill="#111"/></svg>
<div style="position:absolute;left:1633px;top:75px;width:1px;height:20px;background:#8996ab"></div>
<svg style="position:absolute;left:1640px;top:75px" width="16" height="16" viewBox="0 0 16 16"><path d="M8 1 L14 8 H10.5 V15 H5.5 V8 H2 Z" fill="#30c050" stroke="#1a7a30"/></svg>
<svg style="position:absolute;left:1662px;top:75px" width="16" height="16" viewBox="0 0 16 16"><path d="M8 15 L14 8 H10.5 V1 H5.5 V8 H2 Z" fill="#30c050" stroke="#1a7a30"/></svg>
<div style="position:absolute;left:1685px;top:75px;width:1px;height:20px;background:#8996ab"></div>
<svg style="position:absolute;left:1692px;top:75px" width="16" height="16" viewBox="0 0 16 16"><circle cx="8" cy="8" r="7.3" fill="#8a8ae8" stroke="#4a4ac0"/><circle cx="8" cy="8" r="5.3" fill="none" stroke="#e8e8ff" stroke-width="1.2"/><path d="M6 6.3 C6 4.3 10 4.3 10 6.3 C10 7.6 8 7.6 8 9.3" fill="none" stroke="#fff" stroke-width="1.4"/><rect x="7.2" y="10.5" width="1.6" height="1.6" fill="#fff"/></svg>
<div style="position:absolute;left:1431px;top:97px;width:472px;height:451px;background:#fff"></div>
<div style="position:absolute;left:1903px;top:98px;width:15px;height:450px;background:#f0f0f0"></div>
<div style="position:absolute;left:1903px;top:114px;width:15px;height:235px;background:#cdcdcd"></div>
<div style="position:absolute;left:1919px;top:97px;width:1px;height:451px;background:#a8a8a8"></div>
<div style="position:absolute;left:1431px;top:96px;width:489px;height:1px;background:#a4a8b4"></div>
<svg style="position:absolute;left:1906px;top:102px" width="9" height="8"><path d="M1 6 L4.5 2 L8 6" stroke="#4a4a4a" stroke-width="1.9" fill="none"/></svg>
<svg style="position:absolute;left:1906px;top:538px" width="9" height="8"><path d="M1 2 L4.5 6 L8 2" stroke="#4a4a4a" stroke-width="1.9" fill="none"/></svg>
<div style="position:absolute;left:1431px;top:97px;width:472px;height:451px;overflow:hidden">
<div style="position:absolute;left:1px;top:340px;width:471px;height:20px;background:#c0cbdc"></div>
<svg style="position:absolute;left:10px;top:6px" width="9" height="9"><rect x="0.5" y="0.5" width="8" height="8" rx="1" fill="#fff" stroke="#8a8a8a"/><path d="M2 4.5 H7" stroke="#2a4a90"/></svg>
<svg style="position:absolute;left:31px;top:1px" width="17" height="17" viewBox="0 0 17 17"><path d="M0 5 L5 12 V16 L0 9Z" fill="#a8c0e0"/><path d="M0.5 3 L2 1 L11 4 L11 7 Z" fill="#fff" stroke="#e0b020"/><path d="M2 5 L4 3 L13 6 L13 9Z" fill="#fff4c0" stroke="#e0b020"/><path d="M3.5 7 L5.5 5 L15 8 L15 11Z" fill="#ffe8a0" stroke="#d8a818"/><rect x="5" y="10" width="11" height="7" fill="#5a88c8"/><rect x="9" y="11" width="3" height="2" fill="#fff"/></svg>
<div class="t" style="left:52px;top:3px;font-size:12px;letter-spacing:-0.1px">Apache</div>
<svg style="position:absolute;left:33px;top:26px" width="9" height="9"><rect x="0.5" y="0.5" width="8" height="8" rx="1" fill="#fff" stroke="#8a8a8a"/><path d="M2 4.5 H7" stroke="#2a4a90"/></svg>
<svg style="position:absolute;left:54px;top:23px" width="17" height="16" viewBox="0 0 17 16"><rect x="0.5" y="0.5" width="14" height="14" fill="#f8d8b8" stroke="#d8a020"/><path d="M14.5 0.5 V14.5 H0.5" fill="none" stroke="#b04020"/><rect x="4" y="3" width="7" height="8" fill="#c8d8f0" stroke="#6a8ac8"/><path d="M5 5 H10 M5 7 H10" stroke="#fff"/><path d="M11 14 H15 V8" fill="none" stroke="#301010" stroke-width="2"/><path d="M12 13 L14.5 10" stroke="#f02020" stroke-width="1.3"/></svg>
<div class="t" style="left:75px;top:23px;font-size:12px;letter-spacing:-0.1px">xalan</div>
<svg style="position:absolute;left:80px;top:43px" width="11" height="14" viewBox="0 0 11 14"><rect x="0" y="0" width="11" height="14" rx="1" fill="#4a6ac8"/><rect x="1" y="1" width="9" height="2" fill="#fff"/><rect x="1" y="4" width="9" height="3" fill="#b8eef8"/><rect x="2" y="5" width="5" height="1" fill="#f05050"/><rect x="8" y="5" width="1" height="1" fill="#f05050"/><rect x="1" y="8" width="9" height="5" fill="#b8eef8"/><rect x="2" y="9" width="5" height="1" fill="#333"/><rect x="8" y="9" width="1" height="1" fill="#333"/><rect x="2" y="11" width="5" height="1" fill="#333"/><rect x="8" y="11" width="1" height="1" fill="#333"/></svg>
<div class="t" style="left:98px;top:43px;font-size:12px;letter-spacing:-0.1px">«typedef» CharVectorType</div>
<svg style="position:absolute;left:56px;top:66px" width="9" height="9"><rect x="0.5" y="0.5" width="8" height="8" rx="1" fill="#fff" stroke="#8a8a8a"/><path d="M2 4.5 H7" stroke="#2a4a90"/><path d="M4.5 2 V7" stroke="#2a4a90"/></svg>
<svg style="position:absolute;left:80px;top:63px" width="11" height="14" viewBox="0 0 11 14"><rect x="0" y="0" width="11" height="14" rx="1" fill="#4a6ac8"/><rect x="1" y="1" width="9" height="2" fill="#fff"/><rect x="1" y="4" width="9" height="3" fill="#b8eef8"/><rect x="2" y="5" width="5" height="1" fill="#f05050"/><rect x="8" y="5" width="1" height="1" fill="#f05050"/><rect x="1" y="8" width="9" height="5" fill="#b8eef8"/><rect x="2" y="9" width="5" height="1" fill="#333"/><rect x="8" y="9" width="1" height="1" fill="#333"/><rect x="2" y="11" width="5" height="1" fill="#333"/><rect x="8" y="11" width="1" height="1" fill="#333"/></svg>
<div class="t" style="left:98px;top:63px;font-size:12px;letter-spacing:-0.1px">«struct» DOMStringEqualsFunction</div>
<svg style="position:absolute;left:56px;top:86px" width="9" height="9"><rect x="0.5" y="0.5" width="8" height="8" rx="1" fill="#fff" stroke="#8a8a8a"/><path d="M2 4.5 H7" stroke="#2a4a90"/><path d="M4.5 2 V7" stroke="#2a4a90"/></svg>
<svg style="position:absolute;left:80px;top:83px" width="11" height="14" viewBox="0 0 11 14"><rect x="0" y="0" width="11" height="14" rx="1" fill="#4a6ac8"/><rect x="1" y="1" width="9" height="2" fill="#fff"/><rect x="1" y="4" width="9" height="3" fill="#b8eef8"/><rect x="2" y="5" width="5" height="1" fill="#f05050"/><rect x="8" y="5" width="1" height="1" fill="#f05050"/><rect x="1" y="8" width="9" height="5" fill="#b8eef8"/><rect x="2" y="9" width="5" height="1" fill="#333"/><rect x="8" y="9" width="1" height="1" fill="#333"/><rect x="2" y="11" width="5" height="1" fill="#333"/><rect x="8" y="11" width="1" height="1" fill="#333"/></svg>
<div class="t" style="left:98px;top:83px;font-size:12px;letter-spacing:-0.1px">«struct» DOMStringHashFunction</div>
<svg style="position:absolute;left:56px;top:106px" width="9" height="9"><rect x="0.5" y="0.5" width="8" height="8" rx="1" fill="#fff" stroke="#8a8a8a"/><path d="M2 4.5 H7" stroke="#2a4a90"/><path d="M4.5 2 V7" stroke="#2a4a90"/></svg>
<svg style="position:absolute;left:80px;top:103px" width="11" height="14" viewBox="0 0 11 14"><rect x="0" y="0" width="11" height="14" rx="1" fill="#4a6ac8"/><rect x="1" y="1" width="9" height="2" fill="#fff"/><rect x="1" y="4" width="9" height="3" fill="#b8eef8"/><rect x="2" y="5" width="5" height="1" fill="#f05050"/><rect x="8" y="5" width="1" height="1" fill="#f05050"/><rect x="1" y="8" width="9" height="5" fill="#b8eef8"/><rect x="2" y="9" width="5" height="1" fill="#333"/><rect x="8" y="9" width="1" height="1" fill="#333"/><rect x="2" y="11" width="5" height="1" fill="#333"/><rect x="8" y="11" width="1" height="1" fill="#333"/></svg>
<div class="t" style="left:98px;top:103px;font-size:12px;letter-spacing:-0.1px">«struct» DOMStringLessThanFunction</div>
<svg style="position:absolute;left:56px;top:126px" width="9" height="9"><rect x="0.5" y="0.5" width="8" height="8" rx="1" fill="#fff" stroke="#8a8a8a"/><path d="M2 4.5 H7" stroke="#2a4a90"/><path d="M4.5 2 V7" stroke="#2a4a90"/></svg>
<svg style="position:absolute;left:80px;top:123px" width="11" height="14" viewBox="0 0 11 14"><rect x="0" y="0" width="11" height="14" rx="1" fill="#4a6ac8"/><rect x="1" y="1" width="9" height="2" fill="#fff"/><rect x="1" y="4" width="9" height="3" fill="#b8eef8"/><rect x="2" y="5" width="5" height="1" fill="#f05050"/><rect x="8" y="5" width="1" height="1" fill="#f05050"/><rect x="1" y="8" width="9" height="5" fill="#b8eef8"/><rect x="2" y="9" width="5" height="1" fill="#333"/><rect x="8" y="9" width="1" height="1" fill="#333"/><rect x="2" y="11" width="5" height="1" fill="#333"/><rect x="8" y="11" width="1" height="1" fill="#333"/></svg>
<div class="t" style="left:98px;top:123px;font-size:12px;letter-spacing:-0.1px">«struct» DOMStringNotEqualsFunction</div>
<svg style="position:absolute;left:56px;top:146px" width="9" height="9"><rect x="0.5" y="0.5" width="8" height="8" rx="1" fill="#fff" stroke="#8a8a8a"/><path d="M2 4.5 H7" stroke="#2a4a90"/><path d="M4.5 2 V7" stroke="#2a4a90"/></svg>
<svg style="position:absolute;left:80px;top:143px" width="11" height="14" viewBox="0 0 11 14"><rect x="0" y="0" width="11" height="14" rx="1" fill="#4a6ac8"/><rect x="1" y="1" width="9" height="2" fill="#fff"/><rect x="1" y="4" width="9" height="3" fill="#b8eef8"/><rect x="2" y="5" width="5" height="1" fill="#f05050"/><rect x="8" y="5" width="1" height="1" fill="#f05050"/><rect x="1" y="8" width="9" height="5" fill="#b8eef8"/><rect x="2" y="9" width="5" height="1" fill="#333"/><rect x="8" y="9" width="1" height="1" fill="#333"/><rect x="2" y="11" width="5" height="1" fill="#333"/><rect x="8" y="11" width="1" height="1" fill="#333"/></svg>
<div class="t" style="left:98px;top:143px;font-size:12px;letter-spacing:-0.1px">«struct» DOMStringPointerEqualToFunction</div>
<svg style="position:absolute;left:56px;top:166px" width="9" height="9"><rect x="0.5" y="0.5" width="8" height="8" rx="1" fill="#fff" stroke="#8a8a8a"/><path d="M2 4.5 H7" stroke="#2a4a90"/><path d="M4.5 2 V7" stroke="#2a4a90"/></svg>
<svg style="position:absolute;left:80px;top:163px" width="11" height="14" viewBox="0 0 11 14"><rect x="0" y="0" width="11" height="14" rx="1" fill="#4a6ac8"/><rect x="1" y="1" width="9" height="2" fill="#fff"/><rect x="1" y="4" width="9" height="3" fill="#b8eef8"/><rect x="2" y="5" width="5" height="1" fill="#f05050"/><rect x="8" y="5" width="1" height="1" fill="#f05050"/><rect x="1" y="8" width="9" height="5" fill="#b8eef8"/><rect x="2" y="9" width="5" height="1" fill="#333"/><rect x="8" y="9" width="1" height="1" fill="#333"/><rect x="2" y="11" width="5" height="1" fill="#333"/><rect x="8" y="11" width="1" height="1" fill="#333"/></svg>
<div class="t" style="left:98px;top:163px;font-size:12px;letter-spacing:-0.1px">«struct» DOMStringPointerHashFunction</div>
<svg style="position:absolute;left:56px;top:186px" width="9" height="9"><rect x="0.5" y="0.5" width="8" height="8" rx="1" fill="#fff" stroke="#8a8a8a"/><path d="M2 4.5 H7" stroke="#2a4a90"/><path d="M4.5 2 V7" stroke="#2a4a90"/></svg>
<svg style="position:absolute;left:80px;top:183px" width="11" height="14" viewBox="0 0 11 14"><rect x="0" y="0" width="11" height="14" rx="1" fill="#4a6ac8"/><rect x="1" y="1" width="9" height="2" fill="#fff"/><rect x="1" y="4" width="9" height="3" fill="#b8eef8"/><rect x="2" y="5" width="5" height="1" fill="#f05050"/><rect x="8" y="5" width="1" height="1" fill="#f05050"/><rect x="1" y="8" width="9" height="5" fill="#b8eef8"/><rect x="2" y="9" width="5" height="1" fill="#333"/><rect x="8" y="9" width="1" height="1" fill="#333"/><rect x="2" y="11" width="5" height="1" fill="#333"/><rect x="8" y="11" width="1" height="1" fill="#333"/></svg>
<div class="t" style="left:98px;top:183px;font-size:12px;letter-spacing:-0.1px">«struct» DOMStringPointerLessThanFunction</div>
<svg style="position:absolute;left:56px;top:206px" width="9" height="9"><rect x="0.5" y="0.5" width="8" height="8" rx="1" fill="#fff" stroke="#8a8a8a"/><path d="M2 4.5 H7" stroke="#2a4a90"/><path d="M4.5 2 V7" stroke="#2a4a90"/></svg>
<svg style="position:absolute;left:80px;top:203px" width="11" height="14" viewBox="0 0 11 14"><rect x="0" y="0" width="11" height="14" rx="1" fill="#4a6ac8"/><rect x="1" y="1" width="9" height="2" fill="#fff"/><rect x="1" y="4" width="9" height="3" fill="#b8eef8"/><rect x="2" y="5" width="5" height="1" fill="#f05050"/><rect x="8" y="5" width="1" height="1" fill="#f05050"/><rect x="1" y="8" width="9" height="5" fill="#b8eef8"/><rect x="2" y="9" width="5" height="1" fill="#333"/><rect x="8" y="9" width="1" height="1" fill="#333"/><rect x="2" y="11" width="5" height="1" fill="#333"/><rect x="8" y="11" width="1" height="1" fill="#333"/></svg>
<div class="t" style="left:98px;top:203px;font-size:12px;letter-spacing:-0.1px">XalanCharacterData</div>
<svg style="position:absolute;left:56px;top:226px" width="9" height="9"><rect x="0.5" y="0.5" width="8" height="8" rx="1" fill="#fff" stroke="#8a8a8a"/><path d="M2 4.5 H7" stroke="#2a4a90"/><path d="M4.5 2 V7" stroke="#2a4a90"/></svg>
<svg style="position:absolute;left:80px;top:223px" width="11" height="14" viewBox="0 0 11 14"><rect x="0" y="0" width="11" height="14" rx="1" fill="#4a6ac8"/><rect x="1" y="1" width="9" height="2" fill="#fff"/><rect x="1" y="4" width="9" height="3" fill="#b8eef8"/><rect x="2" y="5" width="5" height="1" fill="#f05050"/><rect x="8" y="5" width="1" height="1" fill="#f05050"/><rect x="1" y="8" width="9" height="5" fill="#b8eef8"/><rect x="2" y="9" width="5" height="1" fill="#333"/><rect x="8" y="9" width="1" height="1" fill="#333"/><rect x="2" y="11" width="5" height="1" fill="#333"/><rect x="8" y="11" width="1" height="1" fill="#333"/></svg>
<div class="t" style="left:98px;top:223px;font-size:12px;letter-spacing:-0.1px">XalanComment</div>
<svg style="position:absolute;left:80px;top:243px" width="11" height="14" viewBox="0 0 11 14"><rect x="0" y="0" width="11" height="14" rx="1" fill="#4a6ac8"/><rect x="1" y="1" width="9" height="2" fill="#fff"/><rect x="1" y="4" width="9" height="3" fill="#b8eef8"/><rect x="2" y="5" width="5" height="1" fill="#f05050"/><rect x="8" y="5" width="1" height="1" fill="#f05050"/><rect x="1" y="8" width="9" height="5" fill="#b8eef8"/><rect x="2" y="9" width="5" height="1" fill="#333"/><rect x="8" y="9" width="1" height="1" fill="#333"/><rect x="2" y="11" width="5" height="1" fill="#333"/><rect x="8" y="11" width="1" height="1" fill="#333"/></svg>
<div class="t" style="left:98px;top:243px;font-size:12px;letter-spacing:-0.1px">«typedef» XalanDOMCharVectorType</div>
<svg style="position:absolute;left:56px;top:266px" width="9" height="9"><rect x="0.5" y="0.5" width="8" height="8" rx="1" fill="#fff" stroke="#8a8a8a"/><path d="M2 4.5 H7" stroke="#2a4a90"/><path d="M4.5 2 V7" stroke="#2a4a90"/></svg>
<svg style="position:absolute;left:80px;top:263px" width="11" height="14" viewBox="0 0 11 14"><rect x="0" y="0" width="11" height="14" rx="1" fill="#4a6ac8"/><rect x="1" y="1" width="9" height="2" fill="#fff"/><rect x="1" y="4" width="9" height="3" fill="#b8eef8"/><rect x="2" y="5" width="5" height="1" fill="#f05050"/><rect x="8" y="5" width="1" height="1" fill="#f05050"/><rect x="1" y="8" width="9" height="5" fill="#b8eef8"/><rect x="2" y="9" width="5" height="1" fill="#333"/><rect x="8" y="9" width="1" height="1" fill="#333"/><rect x="2" y="11" width="5" height="1" fill="#333"/><rect x="8" y="11" width="1" height="1" fill="#333"/></svg>
<div class="t" style="left:98px;top:263px;font-size:12px;letter-spacing:-0.1px">XalanDOMException</div>
<svg style="position:absolute;left:56px;top:286px" width="9" height="9"><rect x="0.5" y="0.5" width="8" height="8" rx="1" fill="#fff" stroke="#8a8a8a"/><path d="M2 4.5 H7" stroke="#2a4a90"/><path d="M4.5 2 V7" stroke="#2a4a90"/></svg>
<svg style="position:absolute;left:80px;top:283px" width="11" height="14" viewBox="0 0 11 14"><rect x="0" y="0" width="11" height="14" rx="1" fill="#4a6ac8"/><rect x="1" y="1" width="9" height="2" fill="#fff"/><rect x="1" y="4" width="9" height="3" fill="#b8eef8"/><rect x="2" y="5" width="5" height="1" fill="#f05050"/><rect x="8" y="5" width="1" height="1" fill="#f05050"/><rect x="1" y="8" width="9" height="5" fill="#b8eef8"/><rect x="2" y="9" width="5" height="1" fill="#333"/><rect x="8" y="9" width="1" height="1" fill="#333"/><rect x="2" y="11" width="5" height="1" fill="#333"/><rect x="8" y="11" width="1" height="1" fill="#333"/></svg>
<div class="t" style="left:98px;top:283px;font-size:12px;letter-spacing:-0.1px">XalanDOMImplementation</div>
<svg style="position:absolute;left:56px;top:306px" width="9" height="9"><rect x="0.5" y="0.5" width="8" height="8" rx="1" fill="#fff" stroke="#8a8a8a"/><path d="M2 4.5 H7" stroke="#2a4a90"/><path d="M4.5 2 V7" stroke="#2a4a90"/></svg>
<svg style="position:absolute;left:80px;top:303px" width="11" height="14" viewBox="0 0 11 14"><rect x="0" y="0" width="11" height="14" rx="1" fill="#4a6ac8"/><rect x="1" y="1" width="9" height="2" fill="#fff"/><rect x="1" y="4" width="9" height="3" fill="#b8eef8"/><rect x="2" y="5" width="5" height="1" fill="#f05050"/><rect x="8" y="5" width="1" height="1" fill="#f05050"/><rect x="1" y="8" width="9" height="5" fill="#b8eef8"/><rect x="2" y="9" width="5" height="1" fill="#333"/><rect x="8" y="9" width="1" height="1" fill="#333"/><rect x="2" y="11" width="5" height="1" fill="#333"/><rect x="8" y="11" width="1" height="1" fill="#333"/></svg>
<div class="t" style="left:98px;top:303px;font-size:12px;letter-spacing:-0.1px">XalanDOMInit</div>
<svg style="position:absolute;left:56px;top:326px" width="9" height="9"><rect x="0.5" y="0.5" width="8" height="8" rx="1" fill="#fff" stroke="#8a8a8a"/><path d="M2 4.5 H7" stroke="#2a4a90"/><path d="M4.5 2 V7" stroke="#2a4a90"/></svg>
<svg style="position:absolute;left:80px;top:323px" width="11" height="14" viewBox="0 0 11 14"><rect x="0" y="0" width="11" height="14" rx="1" fill="#4a6ac8"/><rect x="1" y="1" width="9" height="2" fill="#fff"/><rect x="1" y="4" width="9" height="3" fill="#b8eef8"/><rect x="2" y="5" width="5" height="1" fill="#f05050"/><rect x="8" y="5" width="1" height="1" fill="#f05050"/><rect x="1" y="8" width="9" height="5" fill="#b8eef8"/><rect x="2" y="9" width="5" height="1" fill="#333"/><rect x="8" y="9" width="1" height="1" fill="#333"/><rect x="2" y="11" width="5" height="1" fill="#333"/><rect x="8" y="11" width="1" height="1" fill="#333"/></svg>
<div class="t" style="left:98px;top:323px;font-size:12px;letter-spacing:-0.1px">XalanDOMString</div>
<svg style="position:absolute;left:56px;top:346px" width="9" height="9"><rect x="0.5" y="0.5" width="8" height="8" rx="1" fill="#fff" stroke="#8a8a8a"/><path d="M2 4.5 H7" stroke="#2a4a90"/><path d="M4.5 2 V7" stroke="#2a4a90"/></svg>
<svg style="position:absolute;left:80px;top:343px" width="11" height="14" viewBox="0 0 11 14"><rect x="0" y="0" width="11" height="14" rx="1" fill="#4a6ac8"/><rect x="1" y="1" width="9" height="2" fill="#fff"/><rect x="1" y="4" width="9" height="3" fill="#b8eef8"/><rect x="2" y="5" width="5" height="1" fill="#f05050"/><rect x="8" y="5" width="1" height="1" fill="#f05050"/><rect x="1" y="8" width="9" height="5" fill="#b8eef8"/><rect x="2" y="9" width="5" height="1" fill="#333"/><rect x="8" y="9" width="1" height="1" fill="#333"/><rect x="2" y="11" width="5" height="1" fill="#333"/><rect x="8" y="11" width="1" height="1" fill="#333"/></svg>
<div class="t" style="left:98px;top:343px;font-size:12px;letter-spacing:-0.1px">XalanDocument</div>
<svg style="position:absolute;left:56px;top:366px" width="9" height="9"><rect x="0.5" y="0.5" width="8" height="8" rx="1" fill="#fff" stroke="#8a8a8a"/><path d="M2 4.5 H7" stroke="#2a4a90"/><path d="M4.5 2 V7" stroke="#2a4a90"/></svg>
<svg style="position:absolute;left:80px;top:363px" width="11" height="14" viewBox="0 0 11 14"><rect x="0" y="0" width="11" height="14" rx="1" fill="#4a6ac8"/><rect x="1" y="1" width="9" height="2" fill="#fff"/><rect x="1" y="4" width="9" height="3" fill="#b8eef8"/><rect x="2" y="5" width="5" height="1" fill="#f05050"/><rect x="8" y="5" width="1" height="1" fill="#f05050"/><rect x="1" y="8" width="9" height="5" fill="#b8eef8"/><rect x="2" y="9" width="5" height="1" fill="#333"/><rect x="8" y="9" width="1" height="1" fill="#333"/><rect x="2" y="11" width="5" height="1" fill="#333"/><rect x="8" y="11" width="1" height="1" fill="#333"/></svg>
<div class="t" style="left:98px;top:363px;font-size:12px;letter-spacing:-0.1px">XalanDocumentFragment</div>
<svg style="position:absolute;left:56px;top:386px" width="9" height="9"><rect x="0.5" y="0.5" width="8" height="8" rx="1" fill="#fff" stroke="#8a8a8a"/><path d="M2 4.5 H7" stroke="#2a4a90"/><path d="M4.5 2 V7" stroke="#2a4a90"/></svg>
<svg style="position:absolute;left:80px;top:383px" width="11" height="14" viewBox="0 0 11 14"><rect x="0" y="0" width="11" height="14" rx="1" fill="#4a6ac8"/><rect x="1" y="1" width="9" height="2" fill="#fff"/><rect x="1" y="4" width="9" height="3" fill="#b8eef8"/><rect x="2" y="5" width="5" height="1" fill="#f05050"/><rect x="8" y="5" width="1" height="1" fill="#f05050"/><rect x="1" y="8" width="9" height="5" fill="#b8eef8"/><rect x="2" y="9" width="5" height="1" fill="#333"/><rect x="8" y="9" width="1" height="1" fill="#333"/><rect x="2" y="11" width="5" height="1" fill="#333"/><rect x="8" y="11" width="1" height="1" fill="#333"/></svg>
<div class="t" style="left:98px;top:383px;font-size:12px;letter-spacing:-0.1px">XalanDocumentType</div>
<svg style="position:absolute;left:56px;top:406px" width="9" height="9"><rect x="0.5" y="0.5" width="8" height="8" rx="1" fill="#fff" stroke="#8a8a8a"/><path d="M2 4.5 H7" stroke="#2a4a90"/><path d="M4.5 2 V7" stroke="#2a4a90"/></svg>
<svg style="position:absolute;left:80px;top:403px" width="11" height="14" viewBox="0 0 11 14"><rect x="0" y="0" width="11" height="14" rx="1" fill="#4a6ac8"/><rect x="1" y="1" width="9" height="2" fill="#fff"/><rect x="1" y="4" width="9" height="3" fill="#b8eef8"/><rect x="2" y="5" width="5" height="1" fill="#f05050"/><rect x="8" y="5" width="1" height="1" fill="#f05050"/><rect x="1" y="8" width="9" height="5" fill="#b8eef8"/><rect x="2" y="9" width="5" height="1" fill="#333"/><rect x="8" y="9" width="1" height="1" fill="#333"/><rect x="2" y="11" width="5" height="1" fill="#333"/><rect x="8" y="11" width="1" height="1" fill="#333"/></svg>
<div class="t" style="left:98px;top:403px;font-size:12px;letter-spacing:-0.1px">XalanElement</div>
<svg style="position:absolute;left:56px;top:426px" width="9" height="9"><rect x="0.5" y="0.5" width="8" height="8" rx="1" fill="#fff" stroke="#8a8a8a"/><path d="M2 4.5 H7" stroke="#2a4a90"/><path d="M4.5 2 V7" stroke="#2a4a90"/></svg>
<svg style="position:absolute;left:80px;top:423px" width="11" height="14" viewBox="0 0 11 14"><rect x="0" y="0" width="11" height="14" rx="1" fill="#4a6ac8"/><rect x="1" y="1" width="9" height="2" fill="#fff"/><rect x="1" y="4" width="9" height="3" fill="#b8eef8"/><rect x="2" y="5" width="5" height="1" fill="#f05050"/><rect x="8" y="5" width="1" height="1" fill="#f05050"/><rect x="1" y="8" width="9" height="5" fill="#b8eef8"/><rect x="2" y="9" width="5" height="1" fill="#333"/><rect x="8" y="9" width="1" height="1" fill="#333"/><rect x="2" y="11" width="5" height="1" fill="#333"/><rect x="8" y="11" width="1" height="1" fill="#333"/></svg>
<div class="t" style="left:98px;top:423px;font-size:12px;letter-spacing:-0.1px">XalanEmptyNamedNodeMap</div>
<svg style="position:absolute;left:56px;top:446px" width="9" height="9"><rect x="0.5" y="0.5" width="8" height="8" rx="1" fill="#fff" stroke="#8a8a8a"/><path d="M2 4.5 H7" stroke="#2a4a90"/><path d="M4.5 2 V7" stroke="#2a4a90"/></svg>
<svg style="position:absolute;left:80px;top:443px" width="11" height="14" viewBox="0 0 11 14"><rect x="0" y="0" width="11" height="14" rx="1" fill="#4a6ac8"/><rect x="1" y="1" width="9" height="2" fill="#fff"/><rect x="1" y="4" width="9" height="3" fill="#b8eef8"/><rect x="2" y="5" width="5" height="1" fill="#f05050"/><rect x="8" y="5" width="1" height="1" fill="#f05050"/><rect x="1" y="8" width="9" height="5" fill="#b8eef8"/><rect x="2" y="9" width="5" height="1" fill="#333"/><rect x="8" y="9" width="1" height="1" fill="#333"/><rect x="2" y="11" width="5" height="1" fill="#333"/><rect x="8" y="11" width="1" height="1" fill="#333"/></svg>
<div class="t" style="left:98px;top:443px;font-size:12px;letter-spacing:-0.1px">XalanEntity</div>
</div>
<div style="position:absolute;left:0px;top:553px;width:498px;height:22px;background:linear-gradient(#4b5e80,#3f5179)"></div>
<div class="t" style="left:4px;top:557px;font-size:11.5px;letter-spacing:-0.2px;color:#fff;-webkit-text-stroke:0">Memory Viewer</div>
<svg style="position:absolute;left:450px;top:559px" width="44" height="12"><path d="M0 4 H9 L4.5 9 Z" fill="#fff"/><path d="M19.5 1.5 H23.5 V6.5 H19.5 Z M18 6.5 H25 M21.5 7 V11" stroke="#fff" stroke-width="1.2" fill="none"/><path d="M34.5 2.5 L41.5 9.5 M41.5 2.5 L34.5 9.5" stroke="#fff" stroke-width="1.6"/></svg>
<div style="position:absolute;left:0px;top:575px;width:498px;height:26px;background:#bcc7d8"></div>
<div style="position:absolute;left:4px;top:580px;width:146px;height:17px;background:#fff;border:1px solid #8a96aa"></div>
<div class="t" style="left:8px;top:582px;font-size:12px;letter-spacing:-0.1px">0x18ff24</div>
<svg style="position:absolute;left:156px;top:581px" width="16" height="16" viewBox="0 0 16 16"><circle cx="6" cy="6" r="4.5" fill="#c8d8f8" stroke="#2a3a60" stroke-width="1.5"/><path d="M9 9 L14 14" stroke="#2a3a60" stroke-width="2.5"/></svg>
<svg style="position:absolute;left:177px;top:581px" width="16" height="16" viewBox="0 0 16 16"><circle cx="8" cy="8" r="7.3" fill="#8a8ae8" stroke="#4a4ac0"/><circle cx="8" cy="8" r="5.3" fill="none" stroke="#e8e8ff" stroke-width="1.2"/><path d="M6 6.3 C6 4.3 10 4.3 10 6.3 C10 7.6 8 7.6 8 9.3" fill="none" stroke="#fff" stroke-width="1.4"/><rect x="7.2" y="10.5" width="1.6" height="1.6" fill="#fff"/></svg>
<div style="position:absolute;left:0px;top:601px;width:498px;height:402px;background:#fff"></div>
<div style="position:absolute;left:80px;top:601px;width:272px;height:402px;background:#bfcadb"></div>
<div style="position:absolute;left:0;top:601px;width:498px;height:402px;overflow:hidden">
<div class="s" style="left:0px;top:0px;font-size:12px">0x0018FF24</div>
<div class="s" style="left:80px;top:0px;font-size:12.5px;letter-spacing:-0.5px"><span style="position:absolute;left:0px">D0</span><span style="position:absolute;left:16px">57</span><span style="position:absolute;left:32px">41</span><span style="position:absolute;left:48px">00</span><span style="position:absolute;left:64px">03</span><span style="position:absolute;left:80px">00</span><span style="position:absolute;left:96px">00</span><span style="position:absolute;left:112px">00</span><span style="position:absolute;left:128px">7C</span><span style="position:absolute;left:144px">FF</span><span style="position:absolute;left:160px">18</span><span style="position:absolute;left:176px">00</span><span style="position:absolute;left:192px">18</span><span style="position:absolute;left:208px">3C</span><span style="position:absolute;left:224px">41</span></div>
<div class="s" style="left:361px;top:0px;font-size:12.5px"><span style="position:absolute;left:0.0px">.</span><span style="position:absolute;left:8.0px">W</span><span style="position:absolute;left:16.0px">A</span><span style="position:absolute;left:24.0px">.</span><span style="position:absolute;left:32.0px">.</span><span style="position:absolute;left:40.0px">.</span><span style="position:absolute;left:48.0px">.</span><span style="position:absolute;left:56.0px">.</span><span style="position:absolute;left:64.0px">|</span><span style="position:absolute;left:72.0px">.</span><span style="position:absolute;left:80.0px">.</span><span style="position:absolute;left:88.0px">.</span><span style="position:absolute;left:96.0px">.</span><span style="position:absolute;left:104.0px">&lt;</span><span style="position:absolute;left:112.0px">A</span></div>
<div class="s" style="left:0px;top:16px;font-size:12px">0x0018FF33</div>
<div class="s" style="left:80px;top:16px;font-size:12.5px;letter-spacing:-0.5px"><span style="position:absolute;left:0px">00</span><span style="position:absolute;left:16px">02</span><span style="position:absolute;left:32px">00</span><span style="position:absolute;left:48px">00</span><span style="position:absolute;left:64px">00</span><span style="position:absolute;left:80px">80</span><span style="position:absolute;left:96px">4F</span><span style="position:absolute;left:112px">58</span><span style="position:absolute;left:128px">00</span><span style="position:absolute;left:144px">70</span><span style="position:absolute;left:160px">21</span><span style="position:absolute;left:176px">58</span><span style="position:absolute;left:192px">00</span><span style="position:absolute;left:208px">C8</span><span style="position:absolute;left:224px">69</span></div>
<div class="s" style="left:361px;top:16px;font-size:12.5px"><span style="position:absolute;left:0.0px">.</span><span style="position:absolute;left:8.0px">.</span><span style="position:absolute;left:16.0px">.</span><span style="position:absolute;left:24.0px">.</span><span style="position:absolute;left:32.0px">.</span><span style="position:absolute;left:40.0px">.</span><span style="position:absolute;left:48.0px">O</span><span style="position:absolute;left:56.0px">X</span><span style="position:absolute;left:64.0px">.</span><span style="position:absolute;left:72.0px">p</span><span style="position:absolute;left:80.0px">!</span><span style="position:absolute;left:88.0px">X</span><span style="position:absolute;left:96.0px">.</span><span style="position:absolute;left:104.0px">.</span><span style="position:absolute;left:112.0px">i</span></div>
<div class="s" style="left:0px;top:32px;font-size:12px">0x0018FF42</div>
<div class="s" style="left:80px;top:32px;font-size:12.5px;letter-spacing:-0.5px"><span style="position:absolute;left:0px">B6</span><span style="position:absolute;left:16px">47</span><span style="position:absolute;left:32px">00</span><span style="position:absolute;left:48px">00</span><span style="position:absolute;left:64px">00</span><span style="position:absolute;left:80px">00</span><span style="position:absolute;left:96px">00</span><span style="position:absolute;left:112px">00</span><span style="position:absolute;left:128px">00</span><span style="position:absolute;left:144px">00</span><span style="position:absolute;left:160px">00</span><span style="position:absolute;left:176px">E0</span><span style="position:absolute;left:192px">FD</span><span style="position:absolute;left:208px">7F</span><span style="position:absolute;left:224px">00</span></div>
<div class="s" style="left:361px;top:32px;font-size:12.5px"><span style="position:absolute;left:0.0px">.</span><span style="position:absolute;left:8.0px">G</span><span style="position:absolute;left:16.0px">.</span><span style="position:absolute;left:24.0px">.</span><span style="position:absolute;left:32.0px">.</span><span style="position:absolute;left:40.0px">.</span><span style="position:absolute;left:48.0px">.</span><span style="position:absolute;left:56.0px">.</span><span style="position:absolute;left:64.0px">.</span><span style="position:absolute;left:72.0px">.</span><span style="position:absolute;left:80.0px">.</span><span style="position:absolute;left:88.0px">.</span><span style="position:absolute;left:96.0px">.</span><span style="position:absolute;left:104.0px">▯</span><span style="position:absolute;left:112.0px">.</span></div>
<div class="s" style="left:0px;top:48px;font-size:12px">0x0018FF51</div>
<div class="s" style="left:80px;top:48px;font-size:12.5px;letter-spacing:-0.5px"><span style="position:absolute;left:0px">00</span><span style="position:absolute;left:16px">A0</span><span style="position:absolute;left:32px">0F</span><span style="position:absolute;left:48px">7C</span><span style="position:absolute;left:64px">FF</span><span style="position:absolute;left:80px">18</span><span style="position:absolute;left:96px">00</span><span style="position:absolute;left:112px">00</span><span style="position:absolute;left:128px">00</span><span style="position:absolute;left:144px">00</span><span style="position:absolute;left:160px">00</span><span style="position:absolute;left:176px">00</span><span style="position:absolute;left:192px">00</span><span style="position:absolute;left:208px">19</span><span style="position:absolute;left:224px">00</span></div>
<div class="s" style="left:361px;top:48px;font-size:12.5px"><span style="position:absolute;left:0.0px">.</span><span style="position:absolute;left:8.0px">.</span><span style="position:absolute;left:16.0px">.</span><span style="position:absolute;left:24.0px">|</span><span style="position:absolute;left:32.0px">.</span><span style="position:absolute;left:40.0px">.</span><span style="position:absolute;left:48.0px">.</span><span style="position:absolute;left:56.0px">.</span><span style="position:absolute;left:64.0px">.</span><span style="position:absolute;left:72.0px">.</span><span style="position:absolute;left:80.0px">.</span><span style="position:absolute;left:88.0px">.</span><span style="position:absolute;left:96.0px">.</span><span style="position:absolute;left:104.0px">.</span><span style="position:absolute;left:112.0px">.</span></div>
<div class="s" style="left:0px;top:64px;font-size:12px">0x0018FF60</div>
<div class="s" style="left:80px;top:64px;font-size:12.5px;letter-spacing:-0.5px"><span style="position:absolute;left:0px">00</span><span style="position:absolute;left:16px">00</span><span style="position:absolute;left:32px">00</span><span style="position:absolute;left:48px">00</span><span style="position:absolute;left:64px">40</span><span style="position:absolute;left:80px">FF</span><span style="position:absolute;left:96px">18</span><span style="position:absolute;left:112px">00</span><span style="position:absolute;left:128px">7A</span><span style="position:absolute;left:144px">05</span><span style="position:absolute;left:160px">00</span><span style="position:absolute;left:176px">00</span><span style="position:absolute;left:192px">C4</span><span style="position:absolute;left:208px">FF</span><span style="position:absolute;left:224px">18</span></div>
<div class="s" style="left:361px;top:64px;font-size:12.5px"><span style="position:absolute;left:0.0px">.</span><span style="position:absolute;left:8.0px">.</span><span style="position:absolute;left:16.0px">.</span><span style="position:absolute;left:24.0px">.</span><span style="position:absolute;left:32.0px">@</span><span style="position:absolute;left:40.0px">.</span><span style="position:absolute;left:48.0px">.</span><span style="position:absolute;left:56.0px">.</span><span style="position:absolute;left:64.0px">z</span><span style="position:absolute;left:72.0px">.</span><span style="position:absolute;left:80.0px">.</span><span style="position:absolute;left:88.0px">.</span><span style="position:absolute;left:96.0px">.</span><span style="position:absolute;left:104.0px">.</span><span style="position:absolute;left:112.0px">.</span></div>
<div class="s" style="left:0px;top:80px;font-size:12px">0x0018FF6F</div>
<div class="s" style="left:80px;top:80px;font-size:12.5px;letter-spacing:-0.5px"><span style="position:absolute;left:0px">00</span><span style="position:absolute;left:16px">18</span><span style="position:absolute;left:32px">11</span><span style="position:absolute;left:48px">41</span><span style="position:absolute;left:64px">00</span><span style="position:absolute;left:80px">9C</span><span style="position:absolute;left:96px">04</span><span style="position:absolute;left:112px">EF</span><span style="position:absolute;left:128px">47</span><span style="position:absolute;left:144px">00</span><span style="position:absolute;left:160px">00</span><span style="position:absolute;left:176px">00</span><span style="position:absolute;left:192px">00</span><span style="position:absolute;left:208px">84</span><span style="position:absolute;left:224px">FF</span></div>
<div class="s" style="left:361px;top:80px;font-size:12.5px"><span style="position:absolute;left:0.0px">.</span><span style="position:absolute;left:8.0px">.</span><span style="position:absolute;left:16.0px">.</span><span style="position:absolute;left:24.0px">A</span><span style="position:absolute;left:32.0px">.</span><span style="position:absolute;left:40.0px">.</span><span style="position:absolute;left:48.0px">.</span><span style="position:absolute;left:56.0px">.</span><span style="position:absolute;left:64.0px">G</span><span style="position:absolute;left:72.0px">.</span><span style="position:absolute;left:80.0px">.</span><span style="position:absolute;left:88.0px">.</span><span style="position:absolute;left:96.0px">.</span><span style="position:absolute;left:104.0px">.</span><span style="position:absolute;left:112.0px">.</span></div>
<div class="s" style="left:0px;top:96px;font-size:12px">0x0018FF7E</div>
<div class="s" style="left:80px;top:96px;font-size:12.5px;letter-spacing:-0.5px"><span style="position:absolute;left:0px">18</span><span style="position:absolute;left:16px">00</span><span style="position:absolute;left:32px">5F</span><span style="position:absolute;left:48px">3A</span><span style="position:absolute;left:64px">41</span><span style="position:absolute;left:80px">00</span><span style="position:absolute;left:96px">90</span><span style="position:absolute;left:112px">FF</span><span style="position:absolute;left:128px">18</span><span style="position:absolute;left:144px">00</span><span style="position:absolute;left:160px">E3</span><span style="position:absolute;left:176px">86</span><span style="position:absolute;left:192px">46</span><span style="position:absolute;left:208px">75</span><span style="position:absolute;left:224px">00</span></div>
<div class="s" style="left:361px;top:96px;font-size:12.5px"><span style="position:absolute;left:0.0px">.</span><span style="position:absolute;left:8.0px">.</span><span style="position:absolute;left:16.0px">_</span><span style="position:absolute;left:24.0px">:</span><span style="position:absolute;left:32.0px">A</span><span style="position:absolute;left:40.0px">.</span><span style="position:absolute;left:48.0px">.</span><span style="position:absolute;left:56.0px">.</span><span style="position:absolute;left:64.0px">.</span><span style="position:absolute;left:72.0px">.</span><span style="position:absolute;left:80.0px">.</span><span style="position:absolute;left:88.0px">.</span><span style="position:absolute;left:96.0px">F</span><span style="position:absolute;left:104.0px">u</span><span style="position:absolute;left:112.0px">.</span></div>
<div class="s" style="left:0px;top:112px;font-size:12px">0x0018FF8D</div>
<div class="s" style="left:80px;top:112px;font-size:12.5px;letter-spacing:-0.5px"><span style="position:absolute;left:0px">E0</span><span style="position:absolute;left:16px">FD</span><span style="position:absolute;left:32px">7F</span><span style="position:absolute;left:48px">D4</span><span style="position:absolute;left:64px">FF</span><span style="position:absolute;left:80px">18</span><span style="position:absolute;left:96px">00</span><span style="position:absolute;left:112px">79</span><span style="position:absolute;left:128px">BD</span><span style="position:absolute;left:144px">B4</span><span style="position:absolute;left:160px">77</span><span style="position:absolute;left:176px">00</span><span style="position:absolute;left:192px">E0</span><span style="position:absolute;left:208px">FD</span><span style="position:absolute;left:224px">7F</span></div>
<div class="s" style="left:361px;top:112px;font-size:12.5px"><span style="position:absolute;left:0.0px">.</span><span style="position:absolute;left:8.0px">.</span><span style="position:absolute;left:16.0px">▯</span><span style="position:absolute;left:24.0px">.</span><span style="position:absolute;left:32.0px">.</span><span style="position:absolute;left:40.0px">.</span><span style="position:absolute;left:48.0px">.</span><span style="position:absolute;left:56.0px">y</span><span style="position:absolute;left:64.0px">.</span><span style="position:absolute;left:72.0px">.</span><span style="position:absolute;left:80.0px">w</span><span style="position:absolute;left:88.0px">.</span><span style="position:absolute;left:96.0px">.</span><span style="position:absolute;left:104.0px">.</span><span style="position:absolute;left:112.0px">▯</span></div>
<div class="s" style="left:0px;top:128px;font-size:12px">0x0018FF9C</div>
<div class="s" style="left:80px;top:128px;font-size:12.5px;letter-spacing:-0.5px"><span style="position:absolute;left:0px">00</span><span style="position:absolute;left:16px">6C</span><span style="position:absolute;left:32px">C1</span><span style="position:absolute;left:48px">F8</span><span style="position:absolute;left:64px">00</span><span style="position:absolute;left:80px">00</span><span style="position:absolute;left:96px">00</span><span style="position:absolute;left:112px">00</span><span style="position:absolute;left:128px">00</span><span style="position:absolute;left:144px">00</span><span style="position:absolute;left:160px">00</span><span style="position:absolute;left:176px">00</span><span style="position:absolute;left:192px">00</span><span style="position:absolute;left:208px">E0</span><span style="position:absolute;left:224px">FD</span></div>
<div class="s" style="left:361px;top:128px;font-size:12.5px"><span style="position:absolute;left:0.0px">.</span><span style="position:absolute;left:8.0px">l</span><span style="position:absolute;left:16.0px">.</span><span style="position:absolute;left:24.0px">.</span><span style="position:absolute;left:32.0px">.</span><span style="position:absolute;left:40.0px">.</span><span style="position:absolute;left:48.0px">.</span><span style="position:absolute;left:56.0px">.</span><span style="position:absolute;left:64.0px">.</span><span style="position:absolute;left:72.0px">.</span><span style="position:absolute;left:80.0px">.</span><span style="position:absolute;left:88.0px">.</span><span style="position:absolute;left:96.0px">.</span><span style="position:absolute;left:104.0px">.</span><span style="position:absolute;left:112.0px">.</span></div>
<div class="s" style="left:0px;top:144px;font-size:12px">0x0018FFAB</div>
<div class="s" style="left:80px;top:144px;font-size:12.5px;letter-spacing:-0.5px"><span style="position:absolute;left:0px">7F</span><span style="position:absolute;left:16px">FF</span><span style="position:absolute;left:32px">AE</span><span style="position:absolute;left:48px">0C</span><span style="position:absolute;left:64px">04</span><span style="position:absolute;left:80px">02</span><span style="position:absolute;left:96px">F8</span><span style="position:absolute;left:112px">FF</span><span style="position:absolute;left:128px">FF</span><span style="position:absolute;left:144px">50</span><span style="position:absolute;left:160px">56</span><span style="position:absolute;left:176px">B7</span><span style="position:absolute;left:192px">06</span><span style="position:absolute;left:208px">80</span><span style="position:absolute;left:224px">F8</span></div>
<div class="s" style="left:361px;top:144px;font-size:12.5px"><span style="position:absolute;left:0.0px">▯</span><span style="position:absolute;left:8.0px">.</span><span style="position:absolute;left:16.0px">.</span><span style="position:absolute;left:24.0px">.</span><span style="position:absolute;left:32.0px">.</span><span style="position:absolute;left:40.0px">.</span><span style="position:absolute;left:48.0px">.</span><span style="position:absolute;left:56.0px">.</span><span style="position:absolute;left:64.0px">.</span><span style="position:absolute;left:72.0px">P</span><span style="position:absolute;left:80.0px">V</span><span style="position:absolute;left:88.0px">.</span><span style="position:absolute;left:96.0px">.</span><span style="position:absolute;left:104.0px">.</span><span style="position:absolute;left:112.0px">.</span></div>
<div class="s" style="left:0px;top:160px;font-size:12px">0x0018FFBA</div>
<div class="s" style="left:80px;top:160px;font-size:12.5px;letter-spacing:-0.5px"><span style="position:absolute;left:0px">FF</span><span style="position:absolute;left:16px">FF</span><span style="position:absolute;left:32px">9C</span><span style="position:absolute;left:48px">FF</span><span style="position:absolute;left:64px">18</span><span style="position:absolute;left:80px">00</span><span style="position:absolute;left:96px">80</span><span style="position:absolute;left:112px">F8</span><span style="position:absolute;left:128px">FF</span><span style="position:absolute;left:144px">FF</span><span style="position:absolute;left:160px">E4</span><span style="position:absolute;left:176px">FF</span><span style="position:absolute;left:192px">18</span><span style="position:absolute;left:208px">00</span><span style="position:absolute;left:224px">91</span></div>
<div class="s" style="left:361px;top:160px;font-size:12.5px"><span style="position:absolute;left:0.0px">.</span><span style="position:absolute;left:8.0px">.</span><span style="position:absolute;left:16.0px">.</span><span style="position:absolute;left:24.0px">.</span><span style="position:absolute;left:32.0px">.</span><span style="position:absolute;left:40.0px">.</span><span style="position:absolute;left:48.0px">.</span><span style="position:absolute;left:56.0px">.</span><span style="position:absolute;left:64.0px">.</span><span style="position:absolute;left:72.0px">.</span><span style="position:absolute;left:80.0px">.</span><span style="position:absolute;left:88.0px">.</span><span style="position:absolute;left:96.0px">.</span><span style="position:absolute;left:104.0px">.</span><span style="position:absolute;left:112.0px">.</span></div>
<div class="s" style="left:0px;top:176px;font-size:12px">0x0018FFC9</div>
<div class="s" style="left:80px;top:176px;font-size:12.5px;letter-spacing:-0.5px"><span style="position:absolute;left:0px">51</span><span style="position:absolute;left:16px">AF</span><span style="position:absolute;left:32px">77</span><span style="position:absolute;left:48px">BC</span><span style="position:absolute;left:64px">76</span><span style="position:absolute;left:80px">6A</span><span style="position:absolute;left:96px">8F</span><span style="position:absolute;left:112px">00</span><span style="position:absolute;left:128px">00</span><span style="position:absolute;left:144px">00</span><span style="position:absolute;left:160px">00</span><span style="position:absolute;left:176px">EC</span><span style="position:absolute;left:192px">FF</span><span style="position:absolute;left:208px">18</span><span style="position:absolute;left:224px">00</span></div>
<div class="s" style="left:361px;top:176px;font-size:12.5px"><span style="position:absolute;left:0.0px">Q</span><span style="position:absolute;left:8.0px">.</span><span style="position:absolute;left:16.0px">w</span><span style="position:absolute;left:24.0px">.</span><span style="position:absolute;left:32.0px">v</span><span style="position:absolute;left:40.0px">j</span><span style="position:absolute;left:48.0px">.</span><span style="position:absolute;left:56.0px">.</span><span style="position:absolute;left:64.0px">.</span><span style="position:absolute;left:72.0px">.</span><span style="position:absolute;left:80.0px">.</span><span style="position:absolute;left:88.0px">.</span><span style="position:absolute;left:96.0px">.</span><span style="position:absolute;left:104.0px">.</span><span style="position:absolute;left:112.0px">.</span></div>
<div class="s" style="left:0px;top:192px;font-size:12px">0x0018FFD8</div>
<div class="s" style="left:80px;top:192px;font-size:12.5px;letter-spacing:-0.5px"><span style="position:absolute;left:0px">4C</span><span style="position:absolute;left:16px">BD</span><span style="position:absolute;left:32px">B4</span><span style="position:absolute;left:48px">77</span><span style="position:absolute;left:64px">8A</span><span style="position:absolute;left:80px">12</span><span style="position:absolute;left:96px">41</span><span style="position:absolute;left:112px">00</span><span style="position:absolute;left:128px">00</span><span style="position:absolute;left:144px">E0</span><span style="position:absolute;left:160px">FD</span><span style="position:absolute;left:176px">7F</span><span style="position:absolute;left:192px">FF</span><span style="position:absolute;left:208px">FF</span><span style="position:absolute;left:224px">FF</span></div>
<div class="s" style="left:361px;top:192px;font-size:12.5px"><span style="position:absolute;left:0.0px">L</span><span style="position:absolute;left:8.0px">.</span><span style="position:absolute;left:16.0px">.</span><span style="position:absolute;left:24.0px">w</span><span style="position:absolute;left:32.0px">.</span><span style="position:absolute;left:40.0px">.</span><span style="position:absolute;left:48.0px">A</span><span style="position:absolute;left:56.0px">.</span><span style="position:absolute;left:64.0px">.</span><span style="position:absolute;left:72.0px">.</span><span style="position:absolute;left:80.0px">.</span><span style="position:absolute;left:88.0px">▯</span><span style="position:absolute;left:96.0px">.</span><span style="position:absolute;left:104.0px">.</span><span style="position:absolute;left:112.0px">.</span></div>
<div class="s" style="left:0px;top:208px;font-size:12px">0x0018FFE7</div>
<div class="s" style="left:80px;top:208px;font-size:12.5px;letter-spacing:-0.5px"><span style="position:absolute;left:0px">FF</span><span style="position:absolute;left:16px">AF</span><span style="position:absolute;left:32px">21</span><span style="position:absolute;left:48px">BC</span><span style="position:absolute;left:64px">77</span><span style="position:absolute;left:80px">00</span><span style="position:absolute;left:96px">00</span><span style="position:absolute;left:112px">00</span><span style="position:absolute;left:128px">00</span><span style="position:absolute;left:144px">00</span><span style="position:absolute;left:160px">00</span><span style="position:absolute;left:176px">00</span><span style="position:absolute;left:192px">00</span><span style="position:absolute;left:208px">8A</span><span style="position:absolute;left:224px">12</span></div>
<div class="s" style="left:361px;top:208px;font-size:12.5px"><span style="position:absolute;left:0.0px">.</span><span style="position:absolute;left:8.0px">.</span><span style="position:absolute;left:16.0px">!</span><span style="position:absolute;left:24.0px">.</span><span style="position:absolute;left:32.0px">w</span><span style="position:absolute;left:40.0px">.</span><span style="position:absolute;left:48.0px">.</span><span style="position:absolute;left:56.0px">.</span><span style="position:absolute;left:64.0px">.</span><span style="position:absolute;left:72.0px">.</span><span style="position:absolute;left:80.0px">.</span><span style="position:absolute;left:88.0px">.</span><span style="position:absolute;left:96.0px">.</span><span style="position:absolute;left:104.0px">.</span><span style="position:absolute;left:112.0px">.</span></div>
<div class="s" style="left:0px;top:224px;font-size:12px">0x0018FFF6</div>
<div class="s" style="left:80px;top:224px;font-size:12.5px;letter-spacing:-0.5px"><span style="position:absolute;left:0px">41</span><span style="position:absolute;left:16px">00</span><span style="position:absolute;left:32px">00</span><span style="position:absolute;left:48px">E0</span><span style="position:absolute;left:64px">FD</span><span style="position:absolute;left:80px">7F</span><span style="position:absolute;left:96px">00</span><span style="position:absolute;left:112px">00</span><span style="position:absolute;left:128px">00</span><span style="position:absolute;left:144px">00</span><span style="position:absolute;left:160px">41</span><span style="position:absolute;left:176px">63</span><span style="position:absolute;left:192px">74</span><span style="position:absolute;left:208px">78</span><span style="position:absolute;left:224px">20</span></div>
<div class="s" style="left:361px;top:224px;font-size:12.5px"><span style="position:absolute;left:0.0px">A</span><span style="position:absolute;left:8.0px">.</span><span style="position:absolute;left:16.0px">.</span><span style="position:absolute;left:24.0px">.</span><span style="position:absolute;left:32.0px">.</span><span style="position:absolute;left:40.0px">▯</span><span style="position:absolute;left:48.0px">.</span><span style="position:absolute;left:56.0px">.</span><span style="position:absolute;left:64.0px">.</span><span style="position:absolute;left:72.0px">.</span><span style="position:absolute;left:80.0px">A</span><span style="position:absolute;left:88.0px">c</span><span style="position:absolute;left:96.0px">t</span><span style="position:absolute;left:104.0px">x</span><span style="position:absolute;left:112.0px"> </span></div>
<div class="s" style="left:0px;top:240px;font-size:12px">0x00190005</div>
<div class="s" style="left:80px;top:240px;font-size:12.5px;letter-spacing:-0.5px"><span style="position:absolute;left:0px">00</span><span style="position:absolute;left:16px">00</span><span style="position:absolute;left:32px">00</span><span style="position:absolute;left:48px">01</span><span style="position:absolute;left:64px">00</span><span style="position:absolute;left:80px">00</span><span style="position:absolute;left:96px">00</span><span style="position:absolute;left:112px">0C</span><span style="position:absolute;left:128px">33</span><span style="position:absolute;left:144px">00</span><span style="position:absolute;left:160px">00</span><span style="position:absolute;left:176px">DC</span><span style="position:absolute;left:192px">00</span><span style="position:absolute;left:208px">00</span><span style="position:absolute;left:224px">00</span></div>
<div class="s" style="left:361px;top:240px;font-size:12.5px"><span style="position:absolute;left:0.0px">.</span><span style="position:absolute;left:8.0px">.</span><span style="position:absolute;left:16.0px">.</span><span style="position:absolute;left:24.0px">.</span><span style="position:absolute;left:32.0px">.</span><span style="position:absolute;left:40.0px">.</span><span style="position:absolute;left:48.0px">.</span><span style="position:absolute;left:56.0px">.</span><span style="position:absolute;left:64.0px">3</span><span style="position:absolute;left:72.0px">.</span><span style="position:absolute;left:80.0px">.</span><span style="position:absolute;left:88.0px">.</span><span style="position:absolute;left:96.0px">.</span><span style="position:absolute;left:104.0px">.</span><span style="position:absolute;left:112.0px">.</span></div>
<div class="s" style="left:0px;top:256px;font-size:12px">0x00190014</div>
<div class="s" style="left:80px;top:256px;font-size:12.5px;letter-spacing:-0.5px"><span style="position:absolute;left:0px">00</span><span style="position:absolute;left:16px">00</span><span style="position:absolute;left:32px">00</span><span style="position:absolute;left:48px">00</span><span style="position:absolute;left:64px">20</span><span style="position:absolute;left:80px">00</span><span style="position:absolute;left:96px">00</span><span style="position:absolute;left:112px">00</span><span style="position:absolute;left:128px">00</span><span style="position:absolute;left:144px">00</span><span style="position:absolute;left:160px">00</span><span style="position:absolute;left:176px">00</span><span style="position:absolute;left:192px">14</span><span style="position:absolute;left:208px">00</span><span style="position:absolute;left:224px">00</span></div>
<div class="s" style="left:361px;top:256px;font-size:12.5px"><span style="position:absolute;left:0.0px">.</span><span style="position:absolute;left:8.0px">.</span><span style="position:absolute;left:16.0px">.</span><span style="position:absolute;left:24.0px">.</span><span style="position:absolute;left:32.0px"> </span><span style="position:absolute;left:40.0px">.</span><span style="position:absolute;left:48.0px">.</span><span style="position:absolute;left:56.0px">.</span><span style="position:absolute;left:64.0px">.</span><span style="position:absolute;left:72.0px">.</span><span style="position:absolute;left:80.0px">.</span><span style="position:absolute;left:88.0px">.</span><span style="position:absolute;left:96.0px">.</span><span style="position:absolute;left:104.0px">.</span><span style="position:absolute;left:112.0px">.</span></div>
<div class="s" style="left:0px;top:272px;font-size:12px">0x00190023</div>
<div class="s" style="left:80px;top:272px;font-size:12.5px;letter-spacing:-0.5px"><span style="position:absolute;left:0px">00</span><span style="position:absolute;left:16px">01</span><span style="position:absolute;left:32px">00</span><span style="position:absolute;left:48px">00</span><span style="position:absolute;left:64px">00</span><span style="position:absolute;left:80px">07</span><span style="position:absolute;left:96px">00</span><span style="position:absolute;left:112px">00</span><span style="position:absolute;left:128px">00</span><span style="position:absolute;left:144px">34</span><span style="position:absolute;left:160px">00</span><span style="position:absolute;left:176px">00</span><span style="position:absolute;left:192px">00</span><span style="position:absolute;left:208px">7C</span><span style="position:absolute;left:224px">01</span></div>
<div class="s" style="left:361px;top:272px;font-size:12.5px"><span style="position:absolute;left:0.0px">.</span><span style="position:absolute;left:8.0px">.</span><span style="position:absolute;left:16.0px">.</span><span style="position:absolute;left:24.0px">.</span><span style="position:absolute;left:32.0px">.</span><span style="position:absolute;left:40.0px">.</span><span style="position:absolute;left:48.0px">.</span><span style="position:absolute;left:56.0px">.</span><span style="position:absolute;left:64.0px">.</span><span style="position:absolute;left:72.0px">4</span><span style="position:absolute;left:80.0px">.</span><span style="position:absolute;left:88.0px">.</span><span style="position:absolute;left:96.0px">.</span><span style="position:absolute;left:104.0px">|</span><span style="position:absolute;left:112.0px">.</span></div>
<div class="s" style="left:0px;top:288px;font-size:12px">0x00190032</div>
<div class="s" style="left:80px;top:288px;font-size:12.5px;letter-spacing:-0.5px"><span style="position:absolute;left:0px">00</span><span style="position:absolute;left:16px">00</span><span style="position:absolute;left:32px">01</span><span style="position:absolute;left:48px">00</span><span style="position:absolute;left:64px">00</span><span style="position:absolute;left:80px">00</span><span style="position:absolute;left:96px">00</span><span style="position:absolute;left:112px">00</span><span style="position:absolute;left:128px">00</span><span style="position:absolute;left:144px">00</span><span style="position:absolute;left:160px">00</span><span style="position:absolute;left:176px">00</span><span style="position:absolute;left:192px">00</span><span style="position:absolute;left:208px">00</span><span style="position:absolute;left:224px">00</span></div>
<div class="s" style="left:361px;top:288px;font-size:12.5px"><span style="position:absolute;left:0.0px">.</span><span style="position:absolute;left:8.0px">.</span><span style="position:absolute;left:16.0px">.</span><span style="position:absolute;left:24.0px">.</span><span style="position:absolute;left:32.0px">.</span><span style="position:absolute;left:40.0px">.</span><span style="position:absolute;left:48.0px">.</span><span style="position:absolute;left:56.0px">.</span><span style="position:absolute;left:64.0px">.</span><span style="position:absolute;left:72.0px">.</span><span style="position:absolute;left:80.0px">.</span><span style="position:absolute;left:88.0px">.</span><span style="position:absolute;left:96.0px">.</span><span style="position:absolute;left:104.0px">.</span><span style="position:absolute;left:112.0px">.</span></div>
<div class="s" style="left:0px;top:304px;font-size:12px">0x00190041</div>
<div class="s" style="left:80px;top:304px;font-size:12.5px;letter-spacing:-0.5px"><span style="position:absolute;left:0px">00</span><span style="position:absolute;left:16px">00</span><span style="position:absolute;left:32px">00</span><span style="position:absolute;left:48px">00</span><span style="position:absolute;left:64px">00</span><span style="position:absolute;left:80px">00</span><span style="position:absolute;left:96px">00</span><span style="position:absolute;left:112px">00</span><span style="position:absolute;left:128px">00</span><span style="position:absolute;left:144px">00</span><span style="position:absolute;left:160px">00</span><span style="position:absolute;left:176px">02</span><span style="position:absolute;left:192px">00</span><span style="position:absolute;left:208px">00</span><span style="position:absolute;left:224px">00</span></div>
<div class="s" style="left:361px;top:304px;font-size:12.5px"><span style="position:absolute;left:0.0px">.</span><span style="position:absolute;left:8.0px">.</span><span style="position:absolute;left:16.0px">.</span><span style="position:absolute;left:24.0px">.</span><span style="position:absolute;left:32.0px">.</span><span style="position:absolute;left:40.0px">.</span><span style="position:absolute;left:48.0px">.</span><span style="position:absolute;left:56.0px">.</span><span style="position:absolute;left:64.0px">.</span><span style="position:absolute;left:72.0px">.</span><span style="position:absolute;left:80.0px">.</span><span style="position:absolute;left:88.0px">.</span><span style="position:absolute;left:96.0px">.</span><span style="position:absolute;left:104.0px">.</span><span style="position:absolute;left:112.0px">.</span></div>
<div class="s" style="left:0px;top:320px;font-size:12px">0x00190050</div>
<div class="s" style="left:80px;top:320px;font-size:12.5px;letter-spacing:-0.5px"><span style="position:absolute;left:0px">4E</span><span style="position:absolute;left:16px">EF</span><span style="position:absolute;left:32px">26</span><span style="position:absolute;left:48px">1A</span><span style="position:absolute;left:64px">98</span><span style="position:absolute;left:80px">02</span><span style="position:absolute;left:96px">00</span><span style="position:absolute;left:112px">00</span><span style="position:absolute;left:128px">44</span><span style="position:absolute;left:144px">00</span><span style="position:absolute;left:160px">00</span><span style="position:absolute;left:176px">00</span><span style="position:absolute;left:192px">E0</span><span style="position:absolute;left:208px">02</span><span style="position:absolute;left:224px">00</span></div>
<div class="s" style="left:361px;top:320px;font-size:12.5px"><span style="position:absolute;left:0.0px">N</span><span style="position:absolute;left:8.0px">.</span><span style="position:absolute;left:16.0px"> </span><span style="position:absolute;left:24.0px"> </span><span style="position:absolute;left:32.0px">.</span><span style="position:absolute;left:40.0px">.</span><span style="position:absolute;left:48.0px">.</span><span style="position:absolute;left:56.0px">.</span><span style="position:absolute;left:64.0px">D</span><span style="position:absolute;left:72.0px">.</span><span style="position:absolute;left:80.0px">.</span><span style="position:absolute;left:88.0px">.</span><span style="position:absolute;left:96.0px">.</span><span style="position:absolute;left:104.0px">.</span><span style="position:absolute;left:112.0px">.</span></div>
<div class="s" style="left:0px;top:336px;font-size:12px">0x0019005F</div>
<div class="s" style="left:80px;top:336px;font-size:12.5px;letter-spacing:-0.5px"><span style="position:absolute;left:0px">00</span><span style="position:absolute;left:16px">60</span><span style="position:absolute;left:32px">02</span><span style="position:absolute;left:48px">00</span><span style="position:absolute;left:64px">00</span><span style="position:absolute;left:80px">00</span><span style="position:absolute;left:96px">00</span><span style="position:absolute;left:112px">00</span><span style="position:absolute;left:128px">00</span><span style="position:absolute;left:144px">BA</span><span style="position:absolute;left:160px">71</span><span style="position:absolute;left:176px">32</span><span style="position:absolute;left:192px">F3</span><span style="position:absolute;left:208px">40</span><span style="position:absolute;left:224px">05</span></div>
<div class="s" style="left:361px;top:336px;font-size:12.5px"><span style="position:absolute;left:0.0px">.</span><span style="position:absolute;left:8.0px">`</span><span style="position:absolute;left:16.0px">.</span><span style="position:absolute;left:24.0px">.</span><span style="position:absolute;left:32.0px">.</span><span style="position:absolute;left:40.0px">.</span><span style="position:absolute;left:48.0px">.</span><span style="position:absolute;left:56.0px">.</span><span style="position:absolute;left:64.0px">.</span><span style="position:absolute;left:72.0px">.</span><span style="position:absolute;left:80.0px">q</span><span style="position:absolute;left:88.0px">2</span><span style="position:absolute;left:96.0px">.</span><span style="position:absolute;left:104.0px">@</span><span style="position:absolute;left:112.0px">.</span></div>
<div class="s" style="left:0px;top:352px;font-size:12px">0x0019006E</div>
<div class="s" style="left:80px;top:352px;font-size:12.5px;letter-spacing:-0.5px"><span style="position:absolute;left:0px">00</span><span style="position:absolute;left:16px">00</span><span style="position:absolute;left:32px">4A</span><span style="position:absolute;left:48px">00</span><span style="position:absolute;left:64px">00</span><span style="position:absolute;left:80px">00</span><span style="position:absolute;left:96px">8C</span><span style="position:absolute;left:112px">05</span><span style="position:absolute;left:128px">00</span><span style="position:absolute;left:144px">00</span><span style="position:absolute;left:160px">1E</span><span style="position:absolute;left:176px">03</span><span style="position:absolute;left:192px">00</span><span style="position:absolute;left:208px">00</span><span style="position:absolute;left:224px">00</span></div>
<div class="s" style="left:361px;top:352px;font-size:12.5px"><span style="position:absolute;left:0.0px">.</span><span style="position:absolute;left:8.0px">.</span><span style="position:absolute;left:16.0px">J</span><span style="position:absolute;left:24.0px">.</span><span style="position:absolute;left:32.0px">.</span><span style="position:absolute;left:40.0px">.</span><span style="position:absolute;left:48.0px">.</span><span style="position:absolute;left:56.0px">.</span><span style="position:absolute;left:64.0px">.</span><span style="position:absolute;left:72.0px">.</span><span style="position:absolute;left:80.0px">.</span><span style="position:absolute;left:88.0px">.</span><span style="position:absolute;left:96.0px">.</span><span style="position:absolute;left:104.0px">.</span><span style="position:absolute;left:112.0px">.</span></div>
<div class="s" style="left:0px;top:368px;font-size:12px">0x0019007D</div>
<div class="s" style="left:80px;top:368px;font-size:12.5px;letter-spacing:-0.5px"><span style="position:absolute;left:0px">00</span><span style="position:absolute;left:16px">00</span><span style="position:absolute;left:32px">00</span><span style="position:absolute;left:48px">5B</span><span style="position:absolute;left:64px">49</span><span style="position:absolute;left:80px">59</span><span style="position:absolute;left:96px">2D</span><span style="position:absolute;left:112px">AC</span><span style="position:absolute;left:128px">08</span><span style="position:absolute;left:144px">00</span><span style="position:absolute;left:160px">00</span><span style="position:absolute;left:176px">32</span><span style="position:absolute;left:192px">00</span><span style="position:absolute;left:208px">00</span><span style="position:absolute;left:224px">00</span></div>
<div class="s" style="left:361px;top:368px;font-size:12.5px"><span style="position:absolute;left:0.0px">.</span><span style="position:absolute;left:8.0px">.</span><span style="position:absolute;left:16.0px">.</span><span style="position:absolute;left:24.0px">[</span><span style="position:absolute;left:32.0px">I</span><span style="position:absolute;left:40.0px">Y</span><span style="position:absolute;left:48.0px">-</span><span style="position:absolute;left:56.0px">.</span><span style="position:absolute;left:64.0px">.</span><span style="position:absolute;left:72.0px">.</span><span style="position:absolute;left:80.0px">.</span><span style="position:absolute;left:88.0px">2</span><span style="position:absolute;left:96.0px">.</span><span style="position:absolute;left:104.0px">.</span><span style="position:absolute;left:112.0px">.</span></div>
<div class="s" style="left:0px;top:384px;font-size:12px">0x0019008C</div>
<div class="s" style="left:80px;top:384px;font-size:12.5px;letter-spacing:-0.5px"><span style="position:absolute;left:0px">E0</span><span style="position:absolute;left:16px">08</span><span style="position:absolute;left:32px">00</span><span style="position:absolute;left:48px">00</span><span style="position:absolute;left:64px">00</span><span style="position:absolute;left:80px">03</span><span style="position:absolute;left:96px">00</span><span style="position:absolute;left:112px">00</span><span style="position:absolute;left:128px">00</span><span style="position:absolute;left:144px">00</span><span style="position:absolute;left:160px">00</span><span style="position:absolute;left:176px">00</span><span style="position:absolute;left:192px">CD</span><span style="position:absolute;left:208px">EA</span><span style="position:absolute;left:224px">CE</span></div>
<div class="s" style="left:361px;top:384px;font-size:12.5px"><span style="position:absolute;left:0.0px">.</span><span style="position:absolute;left:8.0px">.</span><span style="position:absolute;left:16.0px">.</span><span style="position:absolute;left:24.0px">.</span><span style="position:absolute;left:32.0px">.</span><span style="position:absolute;left:40.0px">.</span><span style="position:absolute;left:48.0px">.</span><span style="position:absolute;left:56.0px">.</span><span style="position:absolute;left:64.0px">.</span><span style="position:absolute;left:72.0px">.</span><span style="position:absolute;left:80.0px">.</span><span style="position:absolute;left:88.0px">.</span><span style="position:absolute;left:96.0px">.</span><span style="position:absolute;left:104.0px">.</span><span style="position:absolute;left:112.0px">.</span></div>
</div>
<svg style="position:absolute;left:0px;top:1003px" width="502" height="23"><rect width="502" height="23" fill="url(#dp2)"/></svg>
<svg style="position:absolute;left:5px;top:1007px" width="16" height="15" viewBox="0 0 16 15"><rect x="2" y="1" width="13" height="10" fill="#fff" stroke="#445"/><rect x="2" y="1" width="13" height="2" fill="#5a7ad0"/><circle cx="5" cy="11" r="3.5" fill="#7a6ad8"/></svg>
<div class="t" style="left:22px;top:1008px;font-size:12px;letter-spacing:-0.337px;color:#fff;-webkit-text-stroke:0">Execution Analyzer</div>
<div style="position:absolute;left:126px;top:1004px;width:105px;height:20px;background:#fff;border-radius:0 0 3px 3px"></div>
<svg style="position:absolute;left:131px;top:1007px" width="13" height="13"><path d="M1 0 V11 M4 2 V11 M7 3 V11 M10 5 V11" stroke="#3a7ae0" stroke-width="1.5"/><path d="M0 12 H12" stroke="#3a7ae0"/></svg>
<div class="t" style="left:147px;top:1008px;font-size:12px;letter-spacing:-0.318px;color:#111">Memory Viewer</div>
<div style="position:absolute;left:0px;top:1026px;width:1920px;height:24px;background:#293550"></div>
<div class="t" style="left:2px;top:1032px;font-size:11.5px;letter-spacing:-0.2px;color:#fff;-webkit-text-stroke:0">Line: 64 Column: 1</div>
<svg style="position:absolute;left:0;top:1040px" width="60" height="10"><path d="M13 10 V9 L30 6.5 V10Z M31 10 V6.3 L53 4 V10Z" fill="#fff"/></svg>
<svg style="position:absolute;left:1598px;top:1030px" width="322" height="18">
<circle cx="9" cy="8" r="6.5" fill="none" stroke="#aab" stroke-width="1"/><path d="M6 8 H12" stroke="#aab"/>
<path d="M23 8.5 H109" stroke="#e4e4e4" stroke-width="2.5"/><path d="M50 1 H58 V12 L54 15 L50 12Z" fill="#e4e4e4"/>
<circle cx="125" cy="8" r="6.5" fill="none" stroke="#aab"/><path d="M122 8 H128 M125 5 V11" stroke="#aab"/>
<rect x="134.5" y="0.5" width="185" height="15" fill="none" stroke="#aab"/>
</svg>
<div class="t" style="left:1742px;top:1031px;font-size:11.5px;color:#8e8e88;-webkit-text-stroke:0">CAP</div>
<div class="t" style="left:1780px;top:1031px;font-size:11.5px;color:#fff;-webkit-text-stroke:0">NUM</div>
<div class="t" style="left:1826px;top:1031px;font-size:11.5px;color:#8e8e88;-webkit-text-stroke:0">SCRL</div>
<div class="t" style="left:1870px;top:1031px;font-size:11.5px;color:#8e8e88;-webkit-text-stroke:0">CLOUD</div>
<div style="position:absolute;left:502px;top:553px;width:925px;height:22px;background:linear-gradient(#fef8ea 0%,#fdf2da 50%,#fde9b0 50%,#fde9b2 100%);border-bottom:1px solid #a8b8d0"></div>
<div class="t" style="left:506px;top:557px;font-size:11.5px;letter-spacing:-0.2px;color:#111">Locals</div>
<svg style="position:absolute;left:1379px;top:559px" width="44" height="12"><path d="M0 4 H9 L4.5 9 Z" fill="#111"/><path d="M19.5 1.5 H23.5 V6.5 H19.5 Z M18 6.5 H25 M21.5 7 V11" stroke="#111" stroke-width="1.2" fill="none"/><path d="M34.5 2.5 L41.5 9.5 M41.5 2.5 L34.5 9.5" stroke="#111" stroke-width="1.6"/></svg>
<div style="position:absolute;left:502px;top:575px;width:925px;height:451px;background:#fff"></div>
<div style="position:absolute;left:502px;top:576px;width:925px;height:23px;background:#fafafa"></div>
<div style="position:absolute;left:502px;top:599px;width:909px;height:1px;background:#e0e8f4"></div>
<div style="position:absolute;left:818px;top:577px;width:1px;height:21px;background:#e6e9ee"></div>
<div style="position:absolute;left:981px;top:577px;width:1px;height:21px;background:#e6e9ee"></div>
<div style="position:absolute;left:1218px;top:577px;width:1px;height:21px;background:#e6e9ee"></div>
<div style="position:absolute;left:1343px;top:577px;width:1px;height:21px;background:#e6e9ee"></div>
<div class="t" style="left:507px;top:581px;font-size:12px;letter-spacing:-0.1px;color:#222">Variable</div>
<div class="t" style="left:824px;top:581px;font-size:12px;letter-spacing:-0.1px;color:#222">Value</div>
<div class="t" style="left:988px;top:581px;font-size:12px;letter-spacing:-0.1px;color:#222">Type</div>
<div class="t" style="left:1224px;top:581px;font-size:12px;letter-spacing:-0.1px;color:#222">Address</div>
<div style="position:absolute;left:502px;top:599px;width:909px;height:427px;overflow:hidden">
<svg style="position:absolute;left:9px;top:6px" width="9" height="9"><defs><linearGradient id="lg" x1="0" y1="0" x2="0" y2="1"><stop offset="0" stop-color="#fff"/><stop offset="1" stop-color="#e8d8b8"/></linearGradient></defs><rect x="0.5" y="0.5" width="8" height="8" rx="1.2" fill="url(#lg)" stroke="#7a9ac0"/><path d="M2 4.5 H7" stroke="#000" stroke-width="1.2"/></svg>
<svg style="position:absolute;left:24px;top:6px" width="9" height="12" viewBox="0 0 9 12"><path d="M3.5 0 L0 3.2 L5.2 6.6 L8 4.2Z" fill="#c8a0c8"/><path d="M0 3.2 V6.3 L4.5 11 L5.2 6.6Z" fill="#d050d0"/><path d="M5.2 6.6 L4.5 11 L8 7.7 V4.2Z" fill="#60309a"/></svg>
<div style="position:absolute;left:0;top:0;width:311px;height:427px;overflow:hidden">
<div class="t" style="left:43px;top:3px;font-size:12px;letter-spacing:-0.1px">this</div>
</div>
<div class="t" style="left:327px;top:3px;font-size:12px;letter-spacing:-0.6px">0x00479838</div>
<div style="position:absolute;left:490px;top:0;width:224px;height:427px;overflow:hidden">
<div class="t" style="left:0px;top:3px;font-size:12px;letter-spacing:-0.37px">xercesc_3_1::GrammarResolver*</div>
</div>
<div class="t" style="left:727px;top:3px;font-size:12px;letter-spacing:-0.6px">0x0018bd70</div>
<svg style="position:absolute;left:28px;top:24px" width="9" height="9"><defs><linearGradient id="lg" x1="0" y1="0" x2="0" y2="1"><stop offset="0" stop-color="#fff"/><stop offset="1" stop-color="#e8d8b8"/></linearGradient></defs><rect x="0.5" y="0.5" width="8" height="8" rx="1.2" fill="url(#lg)" stroke="#7a9ac0"/><path d="M2 4.5 H7" stroke="#000" stroke-width="1.2"/></svg>
<svg style="position:absolute;left:43px;top:24px" width="9" height="12" viewBox="0 0 9 12"><path d="M3.5 0 L0 3.2 L5.2 6.6 L8 4.2Z" fill="#b8d0e8"/><path d="M0 3.2 V6.3 L4.5 11 L5.2 6.6Z" fill="#5a9ad8"/><path d="M5.2 6.6 L4.5 11 L8 7.7 V4.2Z" fill="#2a4a88"/></svg>
<div style="position:absolute;left:0;top:0;width:311px;height:427px;overflow:hidden">
<div class="t" style="left:62px;top:21px;font-size:12px;letter-spacing:-0.43px">xercesc_3_1::GrammarResolver</div>
</div>
<div class="t" style="left:327px;top:21px;font-size:12px;letter-spacing:-0.1px"></div>
<div style="position:absolute;left:490px;top:0;width:224px;height:427px;overflow:hidden">
<div class="t" style="left:0px;top:21px;font-size:12px;letter-spacing:-0.37px">xercesc_3_1::GrammarResolver</div>
</div>
<div class="t" style="left:727px;top:21px;font-size:12px;letter-spacing:-0.6px">0x00479838</div>
<svg style="position:absolute;left:62px;top:42px" width="9" height="12" viewBox="0 0 9 12"><path d="M3.5 0 L0 3.2 L5.2 6.6 L8 4.2Z" fill="#b8d0e8"/><path d="M0 3.2 V6.3 L4.5 11 L5.2 6.6Z" fill="#5a9ad8"/><path d="M5.2 6.6 L4.5 11 L8 7.7 V4.2Z" fill="#2a4a88"/></svg>
<div style="position:absolute;left:0;top:0;width:311px;height:427px;overflow:hidden">
<div class="t" style="left:81px;top:39px;font-size:12px;letter-spacing:-0.43px">xercesc_3_1::XMemory</div>
</div>
<div class="t" style="left:327px;top:39px;font-size:12px;letter-spacing:-0.1px"></div>
<div style="position:absolute;left:490px;top:0;width:224px;height:427px;overflow:hidden">
<div class="t" style="left:0px;top:39px;font-size:12px;letter-spacing:0px"></div>
</div>
<div class="t" style="left:727px;top:39px;font-size:12px;letter-spacing:-0.6px">0x00479838</div>
<svg style="position:absolute;left:62px;top:60px" width="9" height="12" viewBox="0 0 9 12"><path d="M3.5 0 L0 3.2 L5.2 6.6 L8 4.2Z" fill="#c8a0c8"/><path d="M0 3.2 V6.3 L4.5 11 L5.2 6.6Z" fill="#d050d0"/><path d="M5.2 6.6 L4.5 11 L8 7.7 V4.2Z" fill="#60309a"/></svg>
<div style="position:absolute;left:0;top:0;width:311px;height:427px;overflow:hidden">
<div class="t" style="left:81px;top:57px;font-size:12px;letter-spacing:-0.1px">fCacheGrammar</div>
</div>
<div class="t" style="left:327px;top:57px;font-size:12px;letter-spacing:-0.1px">false</div>
<div style="position:absolute;left:490px;top:0;width:224px;height:427px;overflow:hidden">
<div class="t" style="left:0px;top:57px;font-size:12px;letter-spacing:0px">bool</div>
</div>
<div class="t" style="left:727px;top:57px;font-size:12px;letter-spacing:-0.6px">0x00479838</div>
<svg style="position:absolute;left:62px;top:78px" width="9" height="12" viewBox="0 0 9 12"><path d="M3.5 0 L0 3.2 L5.2 6.6 L8 4.2Z" fill="#c8a0c8"/><path d="M0 3.2 V6.3 L4.5 11 L5.2 6.6Z" fill="#d050d0"/><path d="M5.2 6.6 L4.5 11 L8 7.7 V4.2Z" fill="#60309a"/></svg>
<div style="position:absolute;left:0;top:0;width:311px;height:427px;overflow:hidden">
<div class="t" style="left:81px;top:75px;font-size:12px;letter-spacing:-0.1px">fUseCachedGrammar</div>
</div>
<div class="t" style="left:327px;top:75px;font-size:12px;letter-spacing:-0.1px">false</div>
<div style="position:absolute;left:490px;top:0;width:224px;height:427px;overflow:hidden">
<div class="t" style="left:0px;top:75px;font-size:12px;letter-spacing:0px">bool</div>
</div>
<div class="t" style="left:727px;top:75px;font-size:12px;letter-spacing:-0.6px">0x00479839</div>
<svg style="position:absolute;left:62px;top:96px" width="9" height="12" viewBox="0 0 9 12"><path d="M3.5 0 L0 3.2 L5.2 6.6 L8 4.2Z" fill="#c8a0c8"/><path d="M0 3.2 V6.3 L4.5 11 L5.2 6.6Z" fill="#d050d0"/><path d="M5.2 6.6 L4.5 11 L8 7.7 V4.2Z" fill="#60309a"/></svg>
<div style="position:absolute;left:0;top:0;width:311px;height:427px;overflow:hidden">
<div class="t" style="left:81px;top:93px;font-size:12px;letter-spacing:-0.1px">fGrammarPoolFromExternalApplication</div>
</div>
<div class="t" style="left:327px;top:93px;font-size:12px;letter-spacing:-0.1px">true</div>
<div style="position:absolute;left:490px;top:0;width:224px;height:427px;overflow:hidden">
<div class="t" style="left:0px;top:93px;font-size:12px;letter-spacing:0px">bool</div>
</div>
<div class="t" style="left:727px;top:93px;font-size:12px;letter-spacing:-0.6px">0x0047983a</div>
<svg style="position:absolute;left:62px;top:114px" width="9" height="12" viewBox="0 0 9 12"><path d="M3.5 0 L0 3.2 L5.2 6.6 L8 4.2Z" fill="#c8a0c8"/><path d="M0 3.2 V6.3 L4.5 11 L5.2 6.6Z" fill="#d050d0"/><path d="M5.2 6.6 L4.5 11 L8 7.7 V4.2Z" fill="#60309a"/></svg>
<div style="position:absolute;left:0;top:0;width:311px;height:427px;overflow:hidden">
<div class="t" style="left:81px;top:111px;font-size:12px;letter-spacing:-0.1px">fStringPool</div>
</div>
<div class="t" style="left:327px;top:111px;font-size:12px;letter-spacing:-0.1px">null</div>
<div style="position:absolute;left:490px;top:0;width:224px;height:427px;overflow:hidden">
<div class="t" style="left:0px;top:111px;font-size:12px;letter-spacing:-0.37px">xercesc_3_1::XMLStringPool*</div>
</div>
<div class="t" style="left:727px;top:111px;font-size:12px;letter-spacing:-0.6px">0x0047983c</div>
<div style="position:absolute;left:79px;top:127px;width:762px;height:18px;background:#3399ff"></div>
<svg style="position:absolute;left:47px;top:132px" width="9" height="9"><defs><linearGradient id="lg" x1="0" y1="0" x2="0" y2="1"><stop offset="0" stop-color="#fff"/><stop offset="1" stop-color="#e8d8b8"/></linearGradient></defs><rect x="0.5" y="0.5" width="8" height="8" rx="1.2" fill="url(#lg)" stroke="#7a9ac0"/><path d="M2 4.5 H7" stroke="#000" stroke-width="1.2"/></svg>
<svg style="position:absolute;left:62px;top:132px" width="9" height="12" viewBox="0 0 9 12"><path d="M3.5 0 L0 3.2 L5.2 6.6 L8 4.2Z" fill="#c8a0c8"/><path d="M0 3.2 V6.3 L4.5 11 L5.2 6.6Z" fill="#d050d0"/><path d="M5.2 6.6 L4.5 11 L8 7.7 V4.2Z" fill="#60309a"/></svg>
<div style="position:absolute;left:0;top:0;width:311px;height:427px;overflow:hidden">
<div class="t" style="left:81px;top:129px;font-size:12px;letter-spacing:-0.1px">fGrammarBucket</div>
</div>
<div class="t" style="left:327px;top:129px;font-size:12px;letter-spacing:-0.6px">0x004798A8</div>
<div style="position:absolute;left:490px;top:0;width:224px;height:427px;overflow:hidden">
<div class="t" style="left:0px;top:129px;font-size:12px;letter-spacing:-0.37px">xercesc_3_1::RefHashTableOf&lt;xercesc_3_1:</div>
</div>
<div class="t" style="left:727px;top:129px;font-size:12px;letter-spacing:-0.6px">0x00479840</div>
<svg style="position:absolute;left:66px;top:150px" width="9" height="9"><defs><linearGradient id="lg" x1="0" y1="0" x2="0" y2="1"><stop offset="0" stop-color="#fff"/><stop offset="1" stop-color="#e8d8b8"/></linearGradient></defs><rect x="0.5" y="0.5" width="8" height="8" rx="1.2" fill="url(#lg)" stroke="#7a9ac0"/><path d="M2 4.5 H7" stroke="#000" stroke-width="1.2"/></svg>
<svg style="position:absolute;left:81px;top:150px" width="9" height="12" viewBox="0 0 9 12"><path d="M3.5 0 L0 3.2 L5.2 6.6 L8 4.2Z" fill="#b8d0e8"/><path d="M0 3.2 V6.3 L4.5 11 L5.2 6.6Z" fill="#5a9ad8"/><path d="M5.2 6.6 L4.5 11 L8 7.7 V4.2Z" fill="#2a4a88"/></svg>
<div style="position:absolute;left:0;top:0;width:311px;height:427px;overflow:hidden">
<div class="t" style="left:100px;top:147px;font-size:12px;letter-spacing:-0.43px">xercesc_3_1::RefHashTableOf&lt;xercesc_3_</div>
</div>
<div class="t" style="left:327px;top:147px;font-size:12px;letter-spacing:-0.1px"></div>
<div style="position:absolute;left:490px;top:0;width:224px;height:427px;overflow:hidden">
<div class="t" style="left:0px;top:147px;font-size:12px;letter-spacing:-0.37px">xercesc_3_1::RefHashTableOf&lt;xercesc_3_1:</div>
</div>
<div class="t" style="left:727px;top:147px;font-size:12px;letter-spacing:-0.6px">0x004798a8</div>
<svg style="position:absolute;left:85px;top:168px" width="9" height="9"><defs><linearGradient id="lg" x1="0" y1="0" x2="0" y2="1"><stop offset="0" stop-color="#fff"/><stop offset="1" stop-color="#e8d8b8"/></linearGradient></defs><rect x="0.5" y="0.5" width="8" height="8" rx="1.2" fill="url(#lg)" stroke="#7a9ac0"/><path d="M2 4.5 H7" stroke="#000" stroke-width="1.2"/><path d="M4.5 2 V7" stroke="#000" stroke-width="1.2"/></svg>
<svg style="position:absolute;left:100px;top:168px" width="9" height="12" viewBox="0 0 9 12"><path d="M3.5 0 L0 3.2 L5.2 6.6 L8 4.2Z" fill="#b8d0e8"/><path d="M0 3.2 V6.3 L4.5 11 L5.2 6.6Z" fill="#5a9ad8"/><path d="M5.2 6.6 L4.5 11 L8 7.7 V4.2Z" fill="#2a4a88"/></svg>
<div style="position:absolute;left:0;top:0;width:311px;height:427px;overflow:hidden">
<div class="t" style="left:119px;top:165px;font-size:12px;letter-spacing:-0.43px">xercesc_3_1::XMemory</div>
</div>
<div class="t" style="left:327px;top:165px;font-size:12px;letter-spacing:-0.1px"></div>
<div style="position:absolute;left:490px;top:0;width:224px;height:427px;overflow:hidden">
<div class="t" style="left:0px;top:165px;font-size:12px;letter-spacing:0px"></div>
</div>
<div class="t" style="left:727px;top:165px;font-size:12px;letter-spacing:-0.6px">0x004798a8</div>
<svg style="position:absolute;left:85px;top:186px" width="9" height="9"><defs><linearGradient id="lg" x1="0" y1="0" x2="0" y2="1"><stop offset="0" stop-color="#fff"/><stop offset="1" stop-color="#e8d8b8"/></linearGradient></defs><rect x="0.5" y="0.5" width="8" height="8" rx="1.2" fill="url(#lg)" stroke="#7a9ac0"/><path d="M2 4.5 H7" stroke="#000" stroke-width="1.2"/><path d="M4.5 2 V7" stroke="#000" stroke-width="1.2"/></svg>
<svg style="position:absolute;left:100px;top:186px" width="9" height="12" viewBox="0 0 9 12"><path d="M3.5 0 L0 3.2 L5.2 6.6 L8 4.2Z" fill="#c8a0c8"/><path d="M0 3.2 V6.3 L4.5 11 L5.2 6.6Z" fill="#d050d0"/><path d="M5.2 6.6 L4.5 11 L8 7.7 V4.2Z" fill="#60309a"/></svg>
<div style="position:absolute;left:0;top:0;width:311px;height:427px;overflow:hidden">
<div class="t" style="left:119px;top:183px;font-size:12px;letter-spacing:-0.1px">fMemoryManager</div>
</div>
<div class="t" style="left:327px;top:183px;font-size:12px;letter-spacing:-0.6px">0x00585038</div>
<div style="position:absolute;left:490px;top:0;width:224px;height:427px;overflow:hidden">
<div class="t" style="left:0px;top:183px;font-size:12px;letter-spacing:-0.37px">xercesc_3_1::MemoryManager*</div>
</div>
<div class="t" style="left:727px;top:183px;font-size:12px;letter-spacing:-0.6px">0x004798a8</div>
<svg style="position:absolute;left:100px;top:204px" width="9" height="12" viewBox="0 0 9 12"><path d="M3.5 0 L0 3.2 L5.2 6.6 L8 4.2Z" fill="#c8a0c8"/><path d="M0 3.2 V6.3 L4.5 11 L5.2 6.6Z" fill="#d050d0"/><path d="M5.2 6.6 L4.5 11 L8 7.7 V4.2Z" fill="#60309a"/></svg>
<div style="position:absolute;left:0;top:0;width:311px;height:427px;overflow:hidden">
<div class="t" style="left:119px;top:201px;font-size:12px;letter-spacing:-0.1px">fAdoptedElems</div>
</div>
<div class="t" style="left:327px;top:201px;font-size:12px;letter-spacing:-0.1px">true</div>
<div style="position:absolute;left:490px;top:0;width:224px;height:427px;overflow:hidden">
<div class="t" style="left:0px;top:201px;font-size:12px;letter-spacing:0px">bool</div>
</div>
<div class="t" style="left:727px;top:201px;font-size:12px;letter-spacing:-0.6px">0x004798ac</div>
<svg style="position:absolute;left:85px;top:222px" width="9" height="9"><defs><linearGradient id="lg" x1="0" y1="0" x2="0" y2="1"><stop offset="0" stop-color="#fff"/><stop offset="1" stop-color="#e8d8b8"/></linearGradient></defs><rect x="0.5" y="0.5" width="8" height="8" rx="1.2" fill="url(#lg)" stroke="#7a9ac0"/><path d="M2 4.5 H7" stroke="#000" stroke-width="1.2"/><path d="M4.5 2 V7" stroke="#000" stroke-width="1.2"/></svg>
<svg style="position:absolute;left:100px;top:222px" width="9" height="12" viewBox="0 0 9 12"><path d="M3.5 0 L0 3.2 L5.2 6.6 L8 4.2Z" fill="#c8a0c8"/><path d="M0 3.2 V6.3 L4.5 11 L5.2 6.6Z" fill="#d050d0"/><path d="M5.2 6.6 L4.5 11 L8 7.7 V4.2Z" fill="#60309a"/></svg>
<div style="position:absolute;left:0;top:0;width:311px;height:427px;overflow:hidden">
<div class="t" style="left:119px;top:219px;font-size:12px;letter-spacing:-0.1px">fBucketList</div>
</div>
<div class="t" style="left:327px;top:219px;font-size:12px;letter-spacing:-0.6px">0x00479900</div>
<div style="position:absolute;left:490px;top:0;width:224px;height:427px;overflow:hidden">
<div class="t" style="left:0px;top:219px;font-size:12px;letter-spacing:-0.37px">xercesc_3_1::RefHashTableBucketElem&lt;xer</div>
</div>
<div class="t" style="left:727px;top:219px;font-size:12px;letter-spacing:-0.6px">0x004798b0</div>
<svg style="position:absolute;left:100px;top:240px" width="9" height="12" viewBox="0 0 9 12"><path d="M3.5 0 L0 3.2 L5.2 6.6 L8 4.2Z" fill="#c8a0c8"/><path d="M0 3.2 V6.3 L4.5 11 L5.2 6.6Z" fill="#d050d0"/><path d="M5.2 6.6 L4.5 11 L8 7.7 V4.2Z" fill="#60309a"/></svg>
<div style="position:absolute;left:0;top:0;width:311px;height:427px;overflow:hidden">
<div class="t" style="left:119px;top:237px;font-size:12px;letter-spacing:-0.1px">fHashModulus</div>
</div>
<div class="t" style="left:327px;top:237px;font-size:12px;letter-spacing:-0.6px">0x1d (29)</div>
<div style="position:absolute;left:490px;top:0;width:224px;height:427px;overflow:hidden">
<div class="t" style="left:0px;top:237px;font-size:12px;letter-spacing:0px">unsigned long</div>
</div>
<div class="t" style="left:727px;top:237px;font-size:12px;letter-spacing:-0.6px">0x004798b4</div>
<svg style="position:absolute;left:100px;top:258px" width="9" height="12" viewBox="0 0 9 12"><path d="M3.5 0 L0 3.2 L5.2 6.6 L8 4.2Z" fill="#c8a0c8"/><path d="M0 3.2 V6.3 L4.5 11 L5.2 6.6Z" fill="#d050d0"/><path d="M5.2 6.6 L4.5 11 L8 7.7 V4.2Z" fill="#60309a"/></svg>
<div style="position:absolute;left:0;top:0;width:311px;height:427px;overflow:hidden">
<div class="t" style="left:119px;top:255px;font-size:12px;letter-spacing:-0.1px">fInitialModulus</div>
</div>
<div class="t" style="left:327px;top:255px;font-size:12px;letter-spacing:-0.6px">0x1d (29)</div>
<div style="position:absolute;left:490px;top:0;width:224px;height:427px;overflow:hidden">
<div class="t" style="left:0px;top:255px;font-size:12px;letter-spacing:0px">unsigned long</div>
</div>
<div class="t" style="left:727px;top:255px;font-size:12px;letter-spacing:-0.6px">0x004798b8</div>
<svg style="position:absolute;left:100px;top:276px" width="9" height="12" viewBox="0 0 9 12"><path d="M3.5 0 L0 3.2 L5.2 6.6 L8 4.2Z" fill="#c8a0c8"/><path d="M0 3.2 V6.3 L4.5 11 L5.2 6.6Z" fill="#d050d0"/><path d="M5.2 6.6 L4.5 11 L8 7.7 V4.2Z" fill="#60309a"/></svg>
<div style="position:absolute;left:0;top:0;width:311px;height:427px;overflow:hidden">
<div class="t" style="left:119px;top:273px;font-size:12px;letter-spacing:-0.1px">fCount</div>
</div>
<div class="t" style="left:327px;top:273px;font-size:12px;letter-spacing:-0.6px">0x0 (0)</div>
<div style="position:absolute;left:490px;top:0;width:224px;height:427px;overflow:hidden">
<div class="t" style="left:0px;top:273px;font-size:12px;letter-spacing:0px">unsigned long</div>
</div>
<div class="t" style="left:727px;top:273px;font-size:12px;letter-spacing:-0.6px">0x004798bc</div>
<svg style="position:absolute;left:85px;top:294px" width="9" height="9"><defs><linearGradient id="lg" x1="0" y1="0" x2="0" y2="1"><stop offset="0" stop-color="#fff"/><stop offset="1" stop-color="#e8d8b8"/></linearGradient></defs><rect x="0.5" y="0.5" width="8" height="8" rx="1.2" fill="url(#lg)" stroke="#7a9ac0"/><path d="M2 4.5 H7" stroke="#000" stroke-width="1.2"/><path d="M4.5 2 V7" stroke="#000" stroke-width="1.2"/></svg>
<svg style="position:absolute;left:100px;top:294px" width="9" height="12" viewBox="0 0 9 12"><path d="M3.5 0 L0 3.2 L5.2 6.6 L8 4.2Z" fill="#c8a0c8"/><path d="M0 3.2 V6.3 L4.5 11 L5.2 6.6Z" fill="#d050d0"/><path d="M5.2 6.6 L4.5 11 L8 7.7 V4.2Z" fill="#60309a"/></svg>
<div style="position:absolute;left:0;top:0;width:311px;height:427px;overflow:hidden">
<div class="t" style="left:119px;top:291px;font-size:12px;letter-spacing:-0.1px">fHasher</div>
</div>
<div class="t" style="left:327px;top:291px;font-size:12px;letter-spacing:-0.1px"></div>
<div style="position:absolute;left:490px;top:0;width:224px;height:427px;overflow:hidden">
<div class="t" style="left:0px;top:291px;font-size:12px;letter-spacing:-0.37px">xercesc_3_1::StringHasher</div>
</div>
<div class="t" style="left:727px;top:291px;font-size:12px;letter-spacing:-0.6px">0x004798c0</div>
<svg style="position:absolute;left:47px;top:312px" width="9" height="9"><defs><linearGradient id="lg" x1="0" y1="0" x2="0" y2="1"><stop offset="0" stop-color="#fff"/><stop offset="1" stop-color="#e8d8b8"/></linearGradient></defs><rect x="0.5" y="0.5" width="8" height="8" rx="1.2" fill="url(#lg)" stroke="#7a9ac0"/><path d="M2 4.5 H7" stroke="#000" stroke-width="1.2"/></svg>
<svg style="position:absolute;left:62px;top:312px" width="9" height="12" viewBox="0 0 9 12"><path d="M3.5 0 L0 3.2 L5.2 6.6 L8 4.2Z" fill="#c8a0c8"/><path d="M0 3.2 V6.3 L4.5 11 L5.2 6.6Z" fill="#d050d0"/><path d="M5.2 6.6 L4.5 11 L8 7.7 V4.2Z" fill="#60309a"/></svg>
<div style="position:absolute;left:0;top:0;width:311px;height:427px;overflow:hidden">
<div class="t" style="left:81px;top:309px;font-size:12px;letter-spacing:-0.1px">fGrammarFromPool</div>
</div>
<div class="t" style="left:327px;top:309px;font-size:12px;letter-spacing:-0.6px">0x004799B8</div>
<div style="position:absolute;left:490px;top:0;width:224px;height:427px;overflow:hidden">
<div class="t" style="left:0px;top:309px;font-size:12px;letter-spacing:-0.37px">xercesc_3_1::RefHashTableOf&lt;xercesc_3_1:</div>
</div>
<div class="t" style="left:727px;top:309px;font-size:12px;letter-spacing:-0.6px">0x00479844</div>
<svg style="position:absolute;left:66px;top:330px" width="9" height="9"><defs><linearGradient id="lg" x1="0" y1="0" x2="0" y2="1"><stop offset="0" stop-color="#fff"/><stop offset="1" stop-color="#e8d8b8"/></linearGradient></defs><rect x="0.5" y="0.5" width="8" height="8" rx="1.2" fill="url(#lg)" stroke="#7a9ac0"/><path d="M2 4.5 H7" stroke="#000" stroke-width="1.2"/></svg>
<svg style="position:absolute;left:81px;top:330px" width="9" height="12" viewBox="0 0 9 12"><path d="M3.5 0 L0 3.2 L5.2 6.6 L8 4.2Z" fill="#b8d0e8"/><path d="M0 3.2 V6.3 L4.5 11 L5.2 6.6Z" fill="#5a9ad8"/><path d="M5.2 6.6 L4.5 11 L8 7.7 V4.2Z" fill="#2a4a88"/></svg>
<div style="position:absolute;left:0;top:0;width:311px;height:427px;overflow:hidden">
<div class="t" style="left:100px;top:327px;font-size:12px;letter-spacing:-0.43px">xercesc_3_1::RefHashTableOf&lt;xercesc_3_</div>
</div>
<div class="t" style="left:327px;top:327px;font-size:12px;letter-spacing:-0.1px"></div>
<div style="position:absolute;left:490px;top:0;width:224px;height:427px;overflow:hidden">
<div class="t" style="left:0px;top:327px;font-size:12px;letter-spacing:-0.37px">xercesc_3_1::RefHashTableOf&lt;xercesc_3_1:</div>
</div>
<div class="t" style="left:727px;top:327px;font-size:12px;letter-spacing:-0.6px">0x004799b8</div>
<svg style="position:absolute;left:85px;top:348px" width="9" height="9"><defs><linearGradient id="lg" x1="0" y1="0" x2="0" y2="1"><stop offset="0" stop-color="#fff"/><stop offset="1" stop-color="#e8d8b8"/></linearGradient></defs><rect x="0.5" y="0.5" width="8" height="8" rx="1.2" fill="url(#lg)" stroke="#7a9ac0"/><path d="M2 4.5 H7" stroke="#000" stroke-width="1.2"/><path d="M4.5 2 V7" stroke="#000" stroke-width="1.2"/></svg>
<svg style="position:absolute;left:100px;top:348px" width="9" height="12" viewBox="0 0 9 12"><path d="M3.5 0 L0 3.2 L5.2 6.6 L8 4.2Z" fill="#b8d0e8"/><path d="M0 3.2 V6.3 L4.5 11 L5.2 6.6Z" fill="#5a9ad8"/><path d="M5.2 6.6 L4.5 11 L8 7.7 V4.2Z" fill="#2a4a88"/></svg>
<div style="position:absolute;left:0;top:0;width:311px;height:427px;overflow:hidden">
<div class="t" style="left:119px;top:345px;font-size:12px;letter-spacing:-0.43px">xercesc_3_1::XMemory</div>
</div>
<div class="t" style="left:327px;top:345px;font-size:12px;letter-spacing:-0.1px"></div>
<div style="position:absolute;left:490px;top:0;width:224px;height:427px;overflow:hidden">
<div class="t" style="left:0px;top:345px;font-size:12px;letter-spacing:0px"></div>
</div>
<div class="t" style="left:727px;top:345px;font-size:12px;letter-spacing:-0.6px">0x004799b8</div>
<svg style="position:absolute;left:85px;top:366px" width="9" height="9"><defs><linearGradient id="lg" x1="0" y1="0" x2="0" y2="1"><stop offset="0" stop-color="#fff"/><stop offset="1" stop-color="#e8d8b8"/></linearGradient></defs><rect x="0.5" y="0.5" width="8" height="8" rx="1.2" fill="url(#lg)" stroke="#7a9ac0"/><path d="M2 4.5 H7" stroke="#000" stroke-width="1.2"/><path d="M4.5 2 V7" stroke="#000" stroke-width="1.2"/></svg>
<svg style="position:absolute;left:100px;top:366px" width="9" height="12" viewBox="0 0 9 12"><path d="M3.5 0 L0 3.2 L5.2 6.6 L8 4.2Z" fill="#c8a0c8"/><path d="M0 3.2 V6.3 L4.5 11 L5.2 6.6Z" fill="#d050d0"/><path d="M5.2 6.6 L4.5 11 L8 7.7 V4.2Z" fill="#60309a"/></svg>
<div style="position:absolute;left:0;top:0;width:311px;height:427px;overflow:hidden">
<div class="t" style="left:119px;top:363px;font-size:12px;letter-spacing:-0.1px">fMemoryManager</div>
</div>
<div class="t" style="left:327px;top:363px;font-size:12px;letter-spacing:-0.6px">0x00585038</div>
<div style="position:absolute;left:490px;top:0;width:224px;height:427px;overflow:hidden">
<div class="t" style="left:0px;top:363px;font-size:12px;letter-spacing:-0.37px">xercesc_3_1::MemoryManager*</div>
</div>
<div class="t" style="left:727px;top:363px;font-size:12px;letter-spacing:-0.6px">0x004799b8</div>
<svg style="position:absolute;left:100px;top:384px" width="9" height="12" viewBox="0 0 9 12"><path d="M3.5 0 L0 3.2 L5.2 6.6 L8 4.2Z" fill="#c8a0c8"/><path d="M0 3.2 V6.3 L4.5 11 L5.2 6.6Z" fill="#d050d0"/><path d="M5.2 6.6 L4.5 11 L8 7.7 V4.2Z" fill="#60309a"/></svg>
<div style="position:absolute;left:0;top:0;width:311px;height:427px;overflow:hidden">
<div class="t" style="left:119px;top:381px;font-size:12px;letter-spacing:-0.1px">fAdoptedElems</div>
</div>
<div class="t" style="left:327px;top:381px;font-size:12px;letter-spacing:-0.1px">false</div>
<div style="position:absolute;left:490px;top:0;width:224px;height:427px;overflow:hidden">
<div class="t" style="left:0px;top:381px;font-size:12px;letter-spacing:0px">bool</div>
</div>
<div class="t" style="left:727px;top:381px;font-size:12px;letter-spacing:-0.6px">0x004799bc</div>
<svg style="position:absolute;left:85px;top:402px" width="9" height="9"><defs><linearGradient id="lg" x1="0" y1="0" x2="0" y2="1"><stop offset="0" stop-color="#fff"/><stop offset="1" stop-color="#e8d8b8"/></linearGradient></defs><rect x="0.5" y="0.5" width="8" height="8" rx="1.2" fill="url(#lg)" stroke="#7a9ac0"/><path d="M2 4.5 H7" stroke="#000" stroke-width="1.2"/><path d="M4.5 2 V7" stroke="#000" stroke-width="1.2"/></svg>
<svg style="position:absolute;left:100px;top:402px" width="9" height="12" viewBox="0 0 9 12"><path d="M3.5 0 L0 3.2 L5.2 6.6 L8 4.2Z" fill="#c8a0c8"/><path d="M0 3.2 V6.3 L4.5 11 L5.2 6.6Z" fill="#d050d0"/><path d="M5.2 6.6 L4.5 11 L8 7.7 V4.2Z" fill="#60309a"/></svg>
<div style="position:absolute;left:0;top:0;width:311px;height:427px;overflow:hidden">
<div class="t" style="left:119px;top:399px;font-size:12px;letter-spacing:-0.1px">fBucketList</div>
</div>
<div class="t" style="left:327px;top:399px;font-size:12px;letter-spacing:-0.6px">0x00479A10</div>
<div style="position:absolute;left:490px;top:0;width:224px;height:427px;overflow:hidden">
<div class="t" style="left:0px;top:399px;font-size:12px;letter-spacing:-0.37px">xercesc_3_1::RefHashTableBucketElem&lt;xer</div>
</div>
<div class="t" style="left:727px;top:399px;font-size:12px;letter-spacing:-0.6px">0x004799c0</div>
<svg style="position:absolute;left:100px;top:420px" width="9" height="12" viewBox="0 0 9 12"><path d="M3.5 0 L0 3.2 L5.2 6.6 L8 4.2Z" fill="#c8a0c8"/><path d="M0 3.2 V6.3 L4.5 11 L5.2 6.6Z" fill="#d050d0"/><path d="M5.2 6.6 L4.5 11 L8 7.7 V4.2Z" fill="#60309a"/></svg>
<div style="position:absolute;left:0;top:0;width:311px;height:427px;overflow:hidden">
<div class="t" style="left:119px;top:417px;font-size:12px;letter-spacing:-0.1px">fHashModulus</div>
</div>
<div class="t" style="left:327px;top:417px;font-size:12px;letter-spacing:-0.6px">0x1d (29)</div>
<div style="position:absolute;left:490px;top:0;width:224px;height:427px;overflow:hidden">
<div class="t" style="left:0px;top:417px;font-size:12px;letter-spacing:0px">unsigned long</div>
</div>
<div class="t" style="left:727px;top:417px;font-size:12px;letter-spacing:-0.6px">0x004799c4</div>
</div>
<div style="position:absolute;left:1411px;top:599px;width:15px;height:427px;background:#f0f0f0"></div>
<div style="position:absolute;left:1412px;top:617px;width:14px;height:231px;background:#cdcdcd"></div>
<svg style="position:absolute;left:1414px;top:604px" width="9" height="8"><path d="M1 6 L4.5 2 L8 6" stroke="#4a4a4a" stroke-width="1.9" fill="none"/></svg>
<svg style="position:absolute;left:1414px;top:1013px" width="9" height="8"><path d="M1 2 L4.5 6 L8 2" stroke="#4a4a4a" stroke-width="1.9" fill="none"/></svg>
<div style="position:absolute;left:1431px;top:553px;width:489px;height:22px;background:linear-gradient(#4b5e80,#3f5179)"></div>
<div class="t" style="left:1435px;top:557px;font-size:11.5px;letter-spacing:-0.2px;color:#fff;-webkit-text-stroke:0">Call Stack</div>
<svg style="position:absolute;left:1872px;top:559px" width="44" height="12"><path d="M0 4 H9 L4.5 9 Z" fill="#fff"/><path d="M19.5 1.5 H23.5 V6.5 H19.5 Z M18 6.5 H25 M21.5 7 V11" stroke="#fff" stroke-width="1.2" fill="none"/><path d="M34.5 2.5 L41.5 9.5 M41.5 2.5 L34.5 9.5" stroke="#fff" stroke-width="1.6"/></svg>
<div style="position:absolute;left:1431px;top:575px;width:489px;height:26px;background:#bcc7d8"></div>
<svg style="position:absolute;left:1437px;top:580px" width="16" height="16" viewBox="0 0 16 16"><rect x="1" y="1" width="14" height="14" fill="#2a4aa0" stroke="#1a2a60"/><rect x="4" y="1" width="8" height="5" fill="#fff"/><rect x="5" y="10" width="6" height="5" fill="#111"/></svg>
<svg style="position:absolute;left:1459px;top:580px" width="16" height="16" viewBox="0 0 16 16"><path d="M3 2 V14 M3 4 H13 M3 9 H13 M3 13 H13 M8 2 V14 M13 2 V14" stroke="#2a3a70" fill="none"/></svg>
<svg style="position:absolute;left:1480px;top:580px" width="16" height="16" viewBox="0 0 16 16"><rect x="1" y="1" width="9" height="10" fill="#fff" stroke="#2a3a70"/><rect x="6" y="5" width="9" height="10" fill="#fff" stroke="#2a3a70"/><path d="M8 8 H13 M8 10 H13 M8 12 H13" stroke="#2a3a70"/></svg>
<svg style="position:absolute;left:1502px;top:578px" width="16" height="16" viewBox="0 0 16 16"><rect x="2" y="2" width="10" height="3" fill="#fff" stroke="#2a3a70"/></svg>
<svg style="position:absolute;left:1524px;top:580px" width="16" height="16" viewBox="0 0 16 16"><rect x="3" y="4" width="9" height="9" fill="#e06060" stroke="#c04040"/></svg>
<svg style="position:absolute;left:1545px;top:580px" width="16" height="16" viewBox="0 0 16 16"><circle cx="8" cy="8" r="7.3" fill="#8a8ae8" stroke="#4a4ac0"/><circle cx="8" cy="8" r="5.3" fill="none" stroke="#e8e8ff" stroke-width="1.2"/><path d="M6 6.3 C6 4.3 10 4.3 10 6.3 C10 7.6 8 7.6 8 9.3" fill="none" stroke="#fff" stroke-width="1.4"/><rect x="7.2" y="10.5" width="1.6" height="1.6" fill="#fff"/></svg>
<div style="position:absolute;left:1431px;top:601px;width:489px;height:169px;background:#fff"></div>
<div style="position:absolute;left:1431px;top:601px;width:489px;height:169px;overflow:hidden">
<div style="position:absolute;left:45px;top:73px;width:450px;height:18px;background:#c0cbdc"></div>
<svg style="position:absolute;left:6px;top:4px" width="12" height="11" viewBox="0 0 12 11"><path d="M0.5 3.5 H5.5 V0.5 L11 5.5 L5.5 10.5 V7.5 H0.5Z" fill="#c0d0f8" stroke="#2a4aa0"/></svg>
<svg style="position:absolute;left:30px;top:77px" width="12" height="11" viewBox="0 0 12 11"><path d="M0.5 3.5 H5.5 V0.5 L11 5.5 L5.5 10.5 V7.5 H0.5Z" fill="#f0b0d0" stroke="#a02a60"/></svg>
<div class="t" style="left:24px;top:3px;font-size:12px;letter-spacing:-0.3px">Thread 4752</div>
<div class="t" style="left:47px;top:21px;font-size:12px;letter-spacing:-0.516px;">SAXPrint.exe!</div>
<div class="t" style="left:122.4px;top:21px;font-size:12px;letter-spacing:-0.149px;">main,</div>
<div class="t" style="left:159px;top:21px;font-size:12px;letter-spacing:-0.027px;">c:\apache\xalan-builds\xerces-src-31\samples\src\saxprint\saxprint.cpp</div>
<div class="t" style="left:47px;top:39px;font-size:12px;letter-spacing:-0.449px;">xerces-c_3_1D.dll!</div>
<div class="t" style="left:144.8px;top:39px;font-size:12px;letter-spacing:-0.710px;">xercesc_3_1.SAXParser.SAXParser,</div>
<div class="t" style="left:326.5px;top:39px;font-size:12px;letter-spacing:-0.027px;">c:\apache\xalan-builds\xerces-src-31</div>
<div class="t" style="left:47px;top:57px;font-size:12px;letter-spacing:-0.449px;">xerces-c_3_1D.dll!</div>
<div class="t" style="left:144.8px;top:57px;font-size:12px;letter-spacing:-0.461px;">xercesc_3_1.SAXParser.initialize,</div>
<div class="t" style="left:316.2px;top:57px;font-size:12px;letter-spacing:-0.027px;">c:\apache\xalan-builds\xerces-src-31</div>
<div class="t" style="left:47px;top:75px;font-size:12px;letter-spacing:-0.449px;">xerces-c_3_1D.dll!</div>
<div class="t" style="left:144.8px;top:75px;font-size:12px;letter-spacing:-0.372px;">xercesc_3_1.GrammarResolver.GrammarResolver,</div>
<div class="t" style="left:407.7px;top:75px;font-size:12px;letter-spacing:-0.027px;">c:\apache\xalan-builds</div>
<div class="t" style="left:47px;top:93px;font-size:12px;letter-spacing:-0.449px;">xerces-c_3_1D.dll!</div>
<div class="t" style="left:144.8px;top:93px;font-size:12px;letter-spacing:-0.232px;">xercesc_3_1.XMLGrammarPoolImpl.XMLGrammarPoolImpl,</div>
<div class="t" style="left:464.4px;top:93px;font-size:12px;letter-spacing:-0.028px;">c:\apache\xalan</div>
<div class="t" style="left:47px;top:111px;font-size:12px;letter-spacing:-0.449px;">xerces-c_3_1D.dll!</div>
<div class="t" style="left:144.8px;top:111px;font-size:12px;letter-spacing:-0.031px;">xercesc_3_1.RefHashTableOf&lt;xercesc_3_1.Grammar,xercesc_3_1.StringHasher&gt;</div>
</div>
<div style="position:absolute;left:1431px;top:770px;width:489px;height:15px;background:#f0f0f0"></div>
<div style="position:absolute;left:1448px;top:771px;width:169px;height:13px;background:#cdcdcd"></div>
<svg style="position:absolute;left:1435px;top:773px" width="8" height="9"><path d="M6 1 L2 4.5 L6 8" stroke="#4a4a4a" stroke-width="1.9" fill="none"/></svg>
<svg style="position:absolute;left:1906px;top:773px" width="8" height="9"><path d="M2 1 L6 4.5 L2 8" stroke="#4a4a4a" stroke-width="1.9" fill="none"/></svg>
<svg style="position:absolute;left:1431px;top:785px" width="489" height="5"><rect width="489" height="5" fill="url(#dp)"/></svg>
<div style="position:absolute;left:1431px;top:790px;width:489px;height:22px;background:linear-gradient(#4b5e80,#3f5179)"></div>
<div class="t" style="left:1435px;top:794px;font-size:11.5px;letter-spacing:-0.2px;color:#fff;-webkit-text-stroke:0">Debug</div>
<svg style="position:absolute;left:1872px;top:796px" width="44" height="12"><path d="M0 4 H9 L4.5 9 Z" fill="#fff"/><path d="M19.5 1.5 H23.5 V6.5 H19.5 Z M18 6.5 H25 M21.5 7 V11" stroke="#fff" stroke-width="1.2" fill="none"/><path d="M34.5 2.5 L41.5 9.5 M41.5 2.5 L34.5 9.5" stroke="#fff" stroke-width="1.6"/></svg>
<div style="position:absolute;left:1431px;top:812px;width:489px;height:27px;background:#bcc7d8"></div>
<svg style="position:absolute;left:1437px;top:817px" width="16" height="16" viewBox="0 0 16 16"><ellipse cx="8" cy="9" rx="5" ry="4" fill="#c02020" stroke="#111" transform="rotate(-35 8 9)"/><path d="M1 9 H4 M12 9 H15 M3 3 L6 6 M13 3 L10 6 M3 15 L6 12 M13 15 L10 12" stroke="#111"/></svg>
<svg style="position:absolute;left:1462px;top:824px" width="6" height="4"><path d="M0 0 H6 L3 3.5Z" fill="#111"/></svg>
<div style="position:absolute;left:1472px;top:814px;width:1px;height:22px;background:#8996ab"></div>
<svg style="position:absolute;left:1480px;top:817px" width="16" height="16" viewBox="0 0 16 16"><circle cx="8" cy="8" r="4" fill="#aab" stroke="#99a" stroke-width="2" stroke-dasharray="2 1"/></svg>
<div style="position:absolute;left:1502px;top:814px;width:1px;height:22px;background:#8996ab"></div>
<svg style="position:absolute;left:1507px;top:818px" width="16" height="16" viewBox="0 0 16 16"><path d="M5 3 L12 8 L5 13Z" fill="none" stroke="#3a5ad0"/></svg>
<svg style="position:absolute;left:1530px;top:818px" width="16" height="16" viewBox="0 0 16 16"><rect x="3" y="4" width="3" height="8" fill="none" stroke="#8a9ae0"/><rect x="9" y="4" width="3" height="8" fill="none" stroke="#8a9ae0"/></svg>
<svg style="position:absolute;left:1553px;top:817px" width="16" height="16" viewBox="0 0 16 16"><path d="M2 2 V13 L5 15 M8 3 H15 M9 6 H15 M9 9 H15 M9 12 H15" stroke="#223" fill="none"/></svg>
<svg style="position:absolute;left:1575px;top:817px" width="16" height="16" viewBox="0 0 16 16"><path d="M2 2 V13 L5 15 M8 3 H15 M9 6 H15 M9 9 H15 M9 12 H15" stroke="#223" fill="none"/></svg>
<svg style="position:absolute;left:1598px;top:817px" width="16" height="16" viewBox="0 0 16 16"><path d="M2 2 V13 L5 15 M8 3 H15 M9 6 H15 M9 9 H15 M9 12 H15" stroke="#223" fill="none"/></svg>
<svg style="position:absolute;left:1619px;top:818px" width="16" height="16" viewBox="0 0 16 16"><rect x="4" y="4" width="8" height="8" fill="#fff" stroke="#2a4ad0" stroke-width="1.5"/></svg>
<div style="position:absolute;left:1642px;top:814px;width:1px;height:22px;background:#8996ab"></div>
<svg style="position:absolute;left:1648px;top:818px" width="16" height="16" viewBox="0 0 16 16"><path d="M1 6 H8 V2 L15 8 L8 14 V10 H1Z" fill="#f0e020" stroke="#8a7a00"/></svg>
<svg style="position:absolute;left:1672px;top:817px" width="16" height="16" viewBox="0 0 16 16"><rect x="1" y="1" width="14" height="14" fill="#2a4aa0" stroke="#1a2a60"/><rect x="4" y="1" width="8" height="5" fill="#fff"/><rect x="5" y="10" width="6" height="5" fill="#111"/></svg>
<div style="position:absolute;left:1695px;top:814px;width:1px;height:22px;background:#8996ab"></div>
<svg style="position:absolute;left:1701px;top:817px" width="16" height="16" viewBox="0 0 16 16"><circle cx="8" cy="8" r="7.3" fill="#8a8ae8" stroke="#4a4ac0"/><circle cx="8" cy="8" r="5.3" fill="none" stroke="#e8e8ff" stroke-width="1.2"/><path d="M6 6.3 C6 4.3 10 4.3 10 6.3 C10 7.6 8 7.6 8 9.3" fill="none" stroke="#fff" stroke-width="1.4"/><rect x="7.2" y="10.5" width="1.6" height="1.6" fill="#fff"/></svg>
<div style="position:absolute;left:1431px;top:839px;width:489px;height:171px;background:#fff"></div>
<div style="position:absolute;left:1431px;top:839px;width:489px;height:171px;overflow:hidden">
<div class="t" style="left:6px;top:3px;font-size:12px;letter-spacing:-0.45px">[1819360124]</div>
<div class="t" style="left:92px;top:3px;font-size:12px;letter-spacing:-0.1px">Stack recording threshold set to 8 frames</div>
<div class="t" style="left:6px;top:22px;font-size:12px;letter-spacing:-0.45px">[1819360191]</div>
<div class="t" style="left:92px;top:22px;font-size:12px;letter-spacing:-0.1px">Default Directory is C:\Apache\xalan-builds\xerces-src-31\Build\Win32\VC9\Debug</div>
<div class="t" style="left:6px;top:41px;font-size:12px;letter-spacing:-0.45px">[1819360192]</div>
<div class="t" style="left:92px;top:41px;font-size:12px;letter-spacing:-0.1px">Loaded C:\Program Files (x86)\Sparx Systems\EA\vea\x86\dbghelp.DLL Product</div>
<div class="t" style="left:6px;top:60px;font-size:12px;letter-spacing:-0.45px">[1819360192]</div>
<div class="t" style="left:92px;top:60px;font-size:12px;letter-spacing:-0.1px">Loaded C:\Program Files (x86)\Sparx Systems\EA\vea\x86\dbghelp.DLL version</div>
<div class="t" style="left:6px;top:79px;font-size:12px;letter-spacing:-0.45px">[1819360193]</div>
<div class="t" style="left:92px;top:79px;font-size:12px;letter-spacing:-0.1px">Default Directory is C:\Apache\xalan-builds\xerces-src-31\Build\Win32\VC9\Debug</div>
<div class="t" style="left:6px;top:98px;font-size:12px;letter-spacing:-0.45px">[1819360204]</div>
<div class="t" style="left:92px;top:98px;font-size:12px;letter-spacing:-0.1px">Debug Session Started</div>
<div class="t" style="left:6px;top:117px;font-size:12px;letter-spacing:-0.45px">[1819464147]</div>
<div class="t" style="left:92px;top:117px;font-size:12px;letter-spacing:-0.1px">unable to debug module MSVCR90D, no debug information</div>
</div>
<div style="position:absolute;left:1431px;top:1010px;width:489px;height:16px;background:#f0f0f0"></div>
<div style="position:absolute;left:1448px;top:1011px;width:115px;height:14px;background:#cdcdcd"></div>
<svg style="position:absolute;left:1435px;top:1013px" width="8" height="9"><path d="M6 1 L2 4.5 L6 8" stroke="#4a4a4a" stroke-width="1.9" fill="none"/></svg>
<svg style="position:absolute;left:1906px;top:1013px" width="8" height="9"><path d="M2 1 L6 4.5 L2 8" stroke="#4a4a4a" stroke-width="1.9" fill="none"/></svg>
</body></html>
